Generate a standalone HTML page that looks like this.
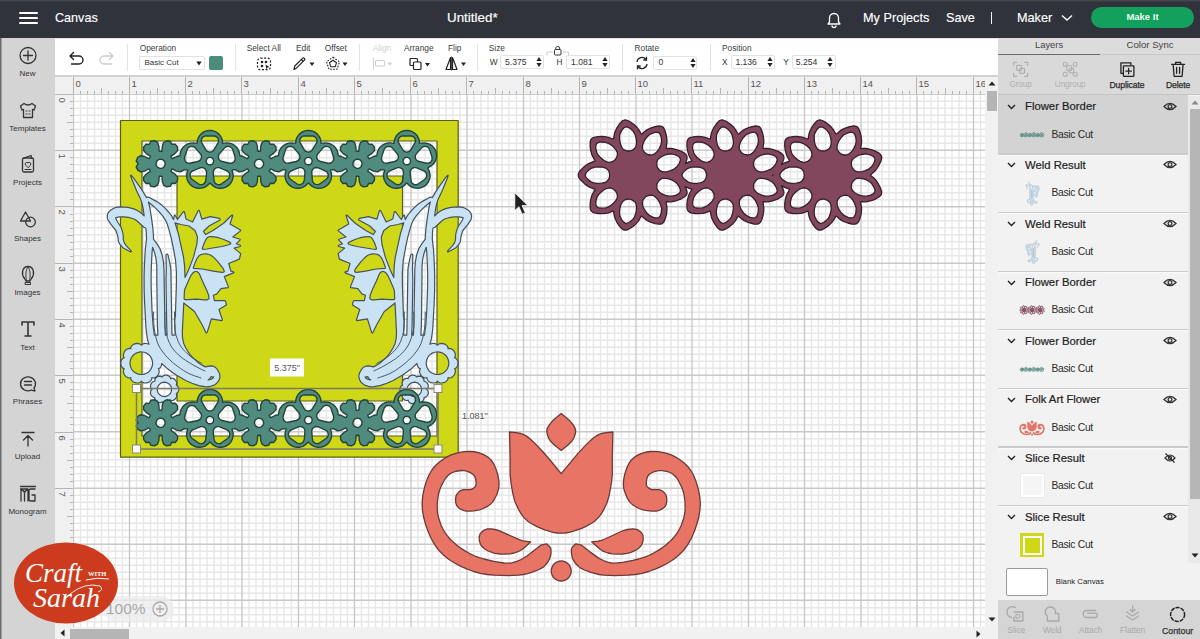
<!DOCTYPE html>
<html><head><meta charset="utf-8">
<style>
*{margin:0;padding:0;box-sizing:border-box}
html,body{width:1200px;height:639px;overflow:hidden;background:#fff;font-family:"Liberation Sans",sans-serif}
.a{position:absolute}
.t{position:absolute;white-space:nowrap;line-height:1}
#top{left:0;top:0;width:1200px;height:38px;background:#30333b;box-shadow:inset 0 1.5px 0 #45474d}
#side{left:0;top:38px;width:55px;height:601px;background:#d4d4d4;box-shadow:inset 1.5px 0 0 #6a6a6a}
#tool{left:55px;top:38px;width:943px;height:39px;background:#fff;box-shadow:inset 0 1px 0 #e6e6e6,inset 0 -2px 0 #d2d2d2}
#rulT{left:55px;top:77px;width:930px;height:17px;background:#f0f0f0}
#rulL{left:55px;top:94px;width:18px;height:533px;background:#f0f0f0}
#canvas{left:73px;top:94px;width:912px;height:533px;background:#fff;overflow:hidden}
#vsb{left:985px;top:77px;width:13px;height:550px;background:#f0f0f0}
#hsb{left:55px;top:627px;width:930px;height:12px;background:#f0f0f0}
#panel{left:998px;top:38px;width:202px;height:601px;background:#f2f2f2;overflow:hidden}
.lbl{font-size:8px;color:#333;text-align:center;width:55px;left:0}
.tl{font-size:8.5px;color:#444}
.w{color:#fff;-webkit-text-stroke:0.15px #fff}
</style></head><body>
<!-- TOP BAR -->
<div id="top" class="a">
  <div class="a" style="left:19px;top:12px;width:19px;height:2px;background:#fff;border-radius:1px"></div>
  <div class="a" style="left:19px;top:17px;width:19px;height:2px;background:#fff;border-radius:1px"></div>
  <div class="a" style="left:19px;top:22px;width:19px;height:2px;background:#fff;border-radius:1px"></div>
  <div class="t w" style="left:55px;top:11.8px;font-size:12.6px">Canvas</div>
  <div class="t w" style="left:447px;top:10.8px;font-size:13.4px">Untitled*</div>
  <svg class="a" style="left:824px;top:10px" width="20" height="19" viewBox="0 0 20 19"><path d="M4 14 L5.5 12 V8 A4.5 4.5 0 0 1 14.5 8 V12 L16 14 Z M8 15.5 A2 2 0 0 0 12 15.5" fill="none" stroke="#fff" stroke-width="1.3" stroke-linejoin="round"/></svg>
  <div class="t w" style="left:863px;top:11.8px;font-size:12.7px">My Projects</div>
  <div class="t w" style="left:946px;top:11.8px;font-size:12.7px">Save</div>
  <div class="a" style="left:991px;top:11.5px;width:1.2px;height:12px;background:#f4f4f4"></div>
  <div class="t w" style="left:1017px;top:11.8px;font-size:12.7px">Maker</div>
  <svg class="a" style="left:1061px;top:14px" width="12" height="8" viewBox="0 0 12 8"><path d="M1 1.5 L6 6 L11 1.5" fill="none" stroke="#fff" stroke-width="1.4"/></svg>
  <div class="a" style="left:1091px;top:7px;width:103px;height:21px;background:#12a05c;border-radius:11px"></div>
  <div class="t" style="left:1091px;top:12px;width:103px;text-align:center;font-size:9.5px;color:#e8fff0;font-weight:bold">Make It</div>
</div>

<!-- LEFT SIDEBAR -->
<div id="side" class="a">
  <svg class="a" style="left:0;top:0" width="55" height="601" fill="none" stroke="#333" stroke-width="1.3" stroke-linecap="round" stroke-linejoin="round">
    <!-- New y=17 -->
    <circle cx="28" cy="17.5" r="8"/><path d="M28 13V22M23.5 17.5H32.5"/>
    <!-- Templates y=72 -->
    <path d="M24 65.5 L20.5 68 L22 72 L23.5 71.5 V79.5 H32.5 V71.5 L34 72 L35.5 68 L32 65.5 Q28 68.5 24 65.5Z"/>
    <path d="M26 73h1M29 73h1M26 76h1M29 76h1" stroke-width="1"/>
    <!-- Projects y=127 -->
    <rect x="22.5" y="120" width="11" height="14" rx="1.5"/><path d="M24 120 L31 117.5 L31.5 120"/>
    <path d="M28 129.5 L25.5 127 A1.4 1.4 0 0 1 28 125 A1.4 1.4 0 0 1 30.5 127Z" stroke-width="1"/><path d="M25 131.5h6" stroke-width="1"/>
    <!-- Shapes y=182 -->
    <path d="M25.5 174 L20.5 183 H30.5Z"/><circle cx="30.5" cy="184" r="4.8"/>
    <!-- Images y=237 -->
    <path d="M28 228.5 C22 228.5 21 236 24.5 240.5 L26 243 H30 L31.5 240.5 C35 236 34 228.5 28 228.5Z"/><path d="M28 228.5 C25.5 232 25.5 238 26.5 243M28 228.5 C30.5 232 30.5 238 29.5 243M25.5 244.5 H30.5 V246.5 H25.5Z" stroke-width="1"/>
    <!-- Text y=291 -->
    <path d="M22 287 V284 H34 V287M28 284 V298M25 298 H31" stroke-width="1.6"/>
    <!-- Phrases y=346 -->
    <path d="M34 350 L35 353 L31.5 352 A7.5 7 0 1 1 34 350Z"/><path d="M24.5 343.5h7M24.5 347h7"/>
    <!-- Upload y=401 -->
    <path d="M22 394.5 H34M28 397.5 V408M23.5 402 L28 397.5 L32.5 402"/>
    <!-- Monogram y=457 -->
    <path d="M20.5 448.5 H35.5M20.5 451 H28 M21 451 V463 M21 452 Q24 452 24.5 455 V463 M24.5 455 Q25 452 28 452 V463 M35 451 H30.5 Q29 451 29 453 V461 Q29 463 31 463 H35 V457 H32" stroke-width="1.3"/>
  </svg>
  <div class="t lbl" style="top:32.0px">New</div>
  <div class="t lbl" style="top:86.5px">Templates</div>
  <div class="t lbl" style="top:141.0px">Projects</div>
  <div class="t lbl" style="top:196.8px">Shapes</div>
  <div class="t lbl" style="top:251.0px">Images</div>
  <div class="t lbl" style="top:305.5px">Text</div>
  <div class="t lbl" style="top:360.4px">Phrases</div>
  <div class="t lbl" style="top:414.8px">Upload</div>
  <div class="t lbl" style="top:469.7px">Monogram</div>
</div>

<!-- TOOLBAR -->
<div id="tool" class="a"><svg class="a" style="left:12px;top:13px" width="62" height="16" fill="none" stroke-width="1.4" stroke-linecap="round" stroke-linejoin="round"><path d="M3 5H12A4 4 0 0 1 12 13H4.5M3 5L6.5 1.5M3 5L6.5 8.5" stroke="#222"/><path d="M46 5H37A4 4 0 0 0 37 13H44.5M46 5L42.5 1.5M46 5L42.5 8.5" stroke="#cdcdcd"/></svg>
<div class="a" style="left:72.0px;top:6px;width:1px;height:27px;background:#e4e4e4"></div>
<div class="t" style="left:84.7px;top:5.6px;font-size:8.3px;color:#3a3a3a">Operation</div>
<div class="a" style="left:84.0px;top:17.7px;width:66.4px;height:14px;border:1px solid #e2e2e2;border-radius:2px"></div>
<div class="t" style="left:89.5px;top:20.7px;font-size:8.0px;color:#333">Basic Cut</div>
<svg class="a" style="left:141.0px;top:22.5px" width="6" height="5"><path d="M0.3 0.5H5.7L3 4.5Z" fill="#222"/></svg>
<div class="a" style="left:154.4px;top:17.7px;width:13.7px;height:14.3px;background:#4b8c7b;border-radius:2px"></div>
<div class="a" style="left:179.7px;top:6px;width:1px;height:27px;background:#e4e4e4"></div>
<div class="t" style="left:191.7px;top:5.6px;font-size:8.3px;color:#3a3a3a">Select All</div>
<svg class="a" style="left:201.0px;top:19.0px" width="17" height="14" fill="none" stroke="#222" stroke-width="1.2"><rect x="1.5" y="1.2" width="13" height="11.5" rx="3" stroke-dasharray="2 1.6"/><circle cx="6" cy="5" r="1.3" fill="#222" stroke="none"/><circle cx="10" cy="5" r="1.3" fill="#222" stroke="none"/><circle cx="6" cy="9" r="1.3" fill="#222" stroke="none"/><path d="M9.5 7.5L13.5 10L11.5 10.5L10.5 12.5Z" fill="#222" stroke="none"/></svg>
<div class="t" style="left:241.0px;top:5.6px;font-size:8.3px;color:#3a3a3a">Edit</div>
<svg class="a" style="left:237.0px;top:18.0px" width="24" height="15" fill="none" stroke="#222" stroke-width="1.2" stroke-linejoin="round"><path d="M2 13.5L2.8 10L10.5 2.3A1.3 1.3 0 0 1 12.4 4.2L4.7 11.9Z"/><path d="M9.3 3.5L11.2 5.4"/><path d="M17.5 6.5H22.5L20 10Z" fill="#222" stroke="none"/></svg>
<div class="t" style="left:269.8px;top:5.6px;font-size:8.3px;color:#3a3a3a">Offset</div>
<svg class="a" style="left:270.0px;top:18.0px" width="24" height="15" fill="none" stroke="#222" stroke-width="1.1"><path d="M8 1.2L14.5 5.8L12 13.3H4L1.5 5.8Z" stroke-dasharray="1.7 1.3"/><path d="M8 4.3L11.5 6.8L10.2 10.8H5.8L4.5 6.8Z"/><path d="M17.5 6.5H22.5L20 10Z" fill="#222" stroke="none"/></svg>
<div class="a" style="left:304.0px;top:6px;width:1px;height:27px;background:#e4e4e4"></div>
<div class="t" style="left:317.7px;top:5.6px;font-size:8.3px;color:#cfcfcf">Align</div>
<svg class="a" style="left:317.0px;top:18.0px" width="22" height="15" fill="none" stroke="#d0d0d0" stroke-width="1.1"><path d="M1.5 1.5V13.5"/><rect x="3.5" y="4.5" width="9" height="5.5" rx="1"/><path d="M15.5 6.5H20L17.75 10Z" fill="#d0d0d0" stroke="none"/></svg>
<div class="t" style="left:349.0px;top:5.6px;font-size:8.3px;color:#3a3a3a">Arrange</div>
<svg class="a" style="left:353.5px;top:18.5px" width="24" height="14" fill="none" stroke="#222" stroke-width="1.2"><rect x="1" y="1.5" width="7.5" height="7" rx="1"/><rect x="4.5" y="5" width="7.5" height="7.5" rx="1" fill="#fff"/><path d="M16 6H21L18.5 9.5Z" fill="#222" stroke="none"/></svg>
<div class="t" style="left:393.0px;top:5.6px;font-size:8.3px;color:#3a3a3a">Flip</div>
<svg class="a" style="left:390.0px;top:18.0px" width="24" height="15" fill="none" stroke="#222" stroke-width="1.2" stroke-linejoin="round"><path d="M5.5 1.5L1 13.5H5.5Z"/><path d="M7.5 1.5L12 13.5H7.5Z"/><path d="M6.5 0.5V14.5" stroke-width="0.8"/><path d="M16 6.5H21L18.5 10Z" fill="#222" stroke="none"/></svg>
<div class="a" style="left:422.3px;top:6px;width:1px;height:27px;background:#e4e4e4"></div>
<div class="t" style="left:433.8px;top:5.6px;font-size:8.3px;color:#3a3a3a">Size</div>
<div class="t" style="left:434.8px;top:20.3px;font-size:8.3px;color:#333">W</div>
<div class="a" style="left:445.2px;top:17.0px;width:43.8px;height:14.3px;border:1px solid #e2e2e2;border-radius:2px;background:#fff"></div>
<div class="t" style="left:450.0px;top:19.9px;font-size:8.6px;color:#333">5.375</div>
<svg class="a" style="left:481.4px;top:18.1px" width="6" height="12"><path d="M3 1L5.6 5H0.4ZM3 11L5.6 7H0.4Z" fill="#222"/></svg>
<svg class="a" style="left:491.0px;top:7.0px" width="24" height="12" fill="none" stroke="#333" stroke-width="1"><rect x="8.5" y="4.5" width="6.5" height="5.5" rx="1"/><path d="M9.8 4.5V3A2 2 0 0 1 13.7 3V4.5"/><path d="M1 10.5V7H7M16.5 7H22.5V10.5" stroke="#cfcfcf"/></svg>
<div class="t" style="left:501.5px;top:20.3px;font-size:8.3px;color:#333">H</div>
<div class="a" style="left:511.3px;top:17.0px;width:43.7px;height:14.3px;border:1px solid #e2e2e2;border-radius:2px;background:#fff"></div>
<div class="t" style="left:516.0px;top:19.9px;font-size:8.6px;color:#333">1.081</div>
<svg class="a" style="left:547.4px;top:18.1px" width="6" height="12"><path d="M3 1L5.6 5H0.4ZM3 11L5.6 7H0.4Z" fill="#222"/></svg>
<div class="a" style="left:567.0px;top:6px;width:1px;height:27px;background:#e4e4e4"></div>
<div class="t" style="left:579.6px;top:5.6px;font-size:8.3px;color:#3a3a3a">Rotate</div>
<svg class="a" style="left:580.0px;top:18.0px" width="14" height="14" fill="none" stroke="#222" stroke-width="1.3"><path d="M2 6A5 5 0 0 1 11 3.5M12 8A5 5 0 0 1 3 10.5"/><path d="M11.5 0.8V4H8.3M2.5 13.2V10H5.7"/></svg>
<div class="a" style="left:598.3px;top:17.5px;width:43.7px;height:14.3px;border:1px solid #e2e2e2;border-radius:2px;background:#fff"></div>
<div class="t" style="left:603.5px;top:20.4px;font-size:8.6px;color:#333">0</div>
<svg class="a" style="left:634.5px;top:18.6px" width="6" height="12"><path d="M3 1L5.6 5H0.4ZM3 11L5.6 7H0.4Z" fill="#222"/></svg>
<div class="a" style="left:654.5px;top:6px;width:1px;height:27px;background:#e4e4e4"></div>
<div class="t" style="left:667.0px;top:5.6px;font-size:8.3px;color:#3a3a3a">Position</div>
<div class="t" style="left:667.0px;top:20.3px;font-size:8.3px;color:#333">X</div>
<div class="a" style="left:676.3px;top:17.0px;width:44.1px;height:14.3px;border:1px solid #e2e2e2;border-radius:2px;background:#fff"></div>
<div class="t" style="left:680.4px;top:19.9px;font-size:8.6px;color:#333">1.136</div>
<svg class="a" style="left:711.8px;top:18.1px" width="6" height="12"><path d="M3 1L5.6 5H0.4ZM3 11L5.6 7H0.4Z" fill="#222"/></svg>
<div class="t" style="left:728.3px;top:20.3px;font-size:8.3px;color:#333">Y</div>
<div class="a" style="left:736.7px;top:17.0px;width:44.8px;height:14.3px;border:1px solid #e2e2e2;border-radius:2px;background:#fff"></div>
<div class="t" style="left:740.8px;top:19.9px;font-size:8.6px;color:#333">5.254</div>
<svg class="a" style="left:772.2px;top:18.1px" width="6" height="12"><path d="M3 1L5.6 5H0.4ZM3 11L5.6 7H0.4Z" fill="#222"/></svg></div>

<!-- RULERS -->
<div id="rulT" class="a"><svg class="a" style="left:0;top:0" width="930" height="17" shape-rendering="crispEdges"><path d="M18.5 0V17M25.5 14V17M32.5 14V17M39.5 14V17M46.5 11V17M53.5 14V17M60.5 14V17M67.5 14V17M74.5 0V17M81.5 14V17M88.5 14V17M95.5 14V17M102.5 11V17M109.5 14V17M116.5 14V17M123.5 14V17M130.5 0V17M137.5 14V17M144.5 14V17M151.5 14V17M158.5 11V17M165.5 14V17M172.5 14V17M179.5 14V17M186.5 0V17M193.5 14V17M201.5 14V17M208.5 14V17M215.5 11V17M222.5 14V17M229.5 14V17M236.5 14V17M243.5 0V17M250.5 14V17M257.5 14V17M264.5 14V17M271.5 11V17M278.5 14V17M285.5 14V17M292.5 14V17M299.5 0V17M306.5 14V17M313.5 14V17M320.5 14V17M327.5 11V17M334.5 14V17M341.5 14V17M348.5 14V17M355.5 0V17M362.5 14V17M369.5 14V17M376.5 14V17M383.5 11V17M390.5 14V17M397.5 14V17M404.5 14V17M411.5 0V17M418.5 14V17M426.5 14V17M433.5 14V17M440.5 11V17M447.5 14V17M454.5 14V17M461.5 14V17M468.5 0V17M475.5 14V17M482.5 14V17M489.5 14V17M496.5 11V17M503.5 14V17M510.5 14V17M517.5 14V17M524.5 0V17M531.5 14V17M538.5 14V17M545.5 14V17M552.5 11V17M559.5 14V17M566.5 14V17M573.5 14V17M580.5 0V17M587.5 14V17M594.5 14V17M601.5 14V17M608.5 11V17M615.5 14V17M622.5 14V17M629.5 14V17M636.5 0V17M643.5 14V17M651.5 14V17M658.5 14V17M665.5 11V17M672.5 14V17M679.5 14V17M686.5 14V17M693.5 0V17M700.5 14V17M707.5 14V17M714.5 14V17M721.5 11V17M728.5 14V17M735.5 14V17M742.5 14V17M749.5 0V17M756.5 14V17M763.5 14V17M770.5 14V17M777.5 11V17M784.5 14V17M791.5 14V17M798.5 14V17M805.5 0V17M812.5 14V17M819.5 14V17M826.5 14V17M833.5 11V17M840.5 14V17M847.5 14V17M854.5 14V17M861.5 0V17M868.5 14V17M876.5 14V17M883.5 14V17M890.5 11V17M897.5 14V17M904.5 14V17M911.5 14V17M918.5 0V17M925.5 14V17" stroke="#b4b4b4" stroke-width="1"/><g fill="#555" font-family="Liberation Sans"><text x="20.5" y="10" font-size="9.5">0</text><text x="76.5" y="10" font-size="9.5">1</text><text x="132.5" y="10" font-size="9.5">2</text><text x="188.5" y="10" font-size="9.5">3</text><text x="245.5" y="10" font-size="9.5">4</text><text x="301.5" y="10" font-size="9.5">5</text><text x="357.5" y="10" font-size="9.5">6</text><text x="413.5" y="10" font-size="9.5">7</text><text x="470.5" y="10" font-size="9.5">8</text><text x="526.5" y="10" font-size="9.5">9</text><text x="582.5" y="10" font-size="9.5">10</text><text x="638.5" y="10" font-size="9.5">11</text><text x="695.5" y="10" font-size="9.5">12</text><text x="751.5" y="10" font-size="9.5">13</text><text x="807.5" y="10" font-size="9.5">14</text><text x="863.5" y="10" font-size="9.5">15</text><text x="920.5" y="10" font-size="9.5">16</text></g></svg></div>
<div id="rulL" class="a"><svg class="a" style="left:0;top:0" width="18" height="533" shape-rendering="crispEdges"><path d="M0 0.5H18M15 7.5H18M15 14.5H18M15 21.5H18M12 28.5H18M15 35.5H18M15 42.5H18M15 49.5H18M0 56.5H18M15 63.5H18M15 70.5H18M15 77.5H18M12 84.5H18M15 91.5H18M15 98.5H18M15 105.5H18M0 112.5H18M15 120.5H18M15 127.5H18M15 134.5H18M12 141.5H18M15 148.5H18M15 155.5H18M15 162.5H18M0 169.5H18M15 176.5H18M15 183.5H18M15 190.5H18M12 197.5H18M15 204.5H18M15 211.5H18M15 218.5H18M0 225.5H18M15 232.5H18M15 239.5H18M15 246.5H18M12 253.5H18M15 260.5H18M15 267.5H18M15 274.5H18M0 281.5H18M15 288.5H18M15 295.5H18M15 302.5H18M12 309.5H18M15 316.5H18M15 323.5H18M15 330.5H18M0 338.5H18M15 345.5H18M15 352.5H18M15 359.5H18M12 366.5H18M15 373.5H18M15 380.5H18M15 387.5H18M0 394.5H18M15 401.5H18M15 408.5H18M15 415.5H18M12 422.5H18M15 429.5H18M15 436.5H18M15 443.5H18M0 450.5H18M15 457.5H18M15 464.5H18M15 471.5H18M12 478.5H18M15 485.5H18M15 492.5H18M15 499.5H18M0 506.5H18M15 513.5H18M15 520.5H18M15 527.5H18" stroke="#b4b4b4" stroke-width="1"/><g fill="#555" font-family="Liberation Sans"><text transform="translate(4,3.5) rotate(90)" font-size="9.5">0</text><text transform="translate(4,59.5) rotate(90)" font-size="9.5">1</text><text transform="translate(4,115.5) rotate(90)" font-size="9.5">2</text><text transform="translate(4,172.5) rotate(90)" font-size="9.5">3</text><text transform="translate(4,228.5) rotate(90)" font-size="9.5">4</text><text transform="translate(4,284.5) rotate(90)" font-size="9.5">5</text><text transform="translate(4,341.5) rotate(90)" font-size="9.5">6</text><text transform="translate(4,397.5) rotate(90)" font-size="9.5">7</text><text transform="translate(4,453.5) rotate(90)" font-size="9.5">8</text><text transform="translate(4,509.5) rotate(90)" font-size="9.5">9</text></g></svg></div>
<div id="canvas" class="a"><svg class="a" style="left:0;top:0" width="912" height="533"><path d="M7.5 0V533M14.5 0V533M21.5 0V533M28.5 0V533M35.5 0V533M42.5 0V533M49.5 0V533M63.5 0V533M70.5 0V533M77.5 0V533M84.5 0V533M91.5 0V533M98.5 0V533M106.0 0V533M120.0 0V533M127.0 0V533M134.0 0V533M141.0 0V533M148.0 0V533M155.0 0V533M162.0 0V533M176.0 0V533M183.0 0V533M190.0 0V533M197.0 0V533M204.0 0V533M211.0 0V533M218.5 0V533M232.5 0V533M239.5 0V533M246.5 0V533M253.5 0V533M260.5 0V533M267.5 0V533M274.5 0V533M288.5 0V533M295.5 0V533M302.5 0V533M309.5 0V533M316.5 0V533M323.5 0V533M331.0 0V533M345.0 0V533M352.0 0V533M359.0 0V533M366.0 0V533M373.0 0V533M380.0 0V533M387.0 0V533M401.0 0V533M408.0 0V533M415.0 0V533M422.0 0V533M429.0 0V533M436.0 0V533M443.5 0V533M457.5 0V533M464.5 0V533M471.5 0V533M478.5 0V533M485.5 0V533M492.5 0V533M499.5 0V533M513.5 0V533M520.5 0V533M527.5 0V533M534.5 0V533M541.5 0V533M548.5 0V533M556.0 0V533M570.0 0V533M577.0 0V533M584.0 0V533M591.0 0V533M598.0 0V533M605.0 0V533M612.0 0V533M626.0 0V533M633.0 0V533M640.0 0V533M647.0 0V533M654.0 0V533M661.0 0V533M668.5 0V533M682.5 0V533M689.5 0V533M696.5 0V533M703.5 0V533M710.5 0V533M717.5 0V533M724.5 0V533M738.5 0V533M745.5 0V533M752.5 0V533M759.5 0V533M766.5 0V533M773.5 0V533M781.0 0V533M795.0 0V533M802.0 0V533M809.0 0V533M816.0 0V533M823.0 0V533M830.0 0V533M837.0 0V533M851.0 0V533M858.0 0V533M865.0 0V533M872.0 0V533M879.0 0V533M886.0 0V533M893.5 0V533M907.5 0V533M0 7.25H912M0 14.25H912M0 21.25H912M0 28.25H912M0 35.25H912M0 42.25H912M0 49.25H912M0 63.75H912M0 70.75H912M0 77.75H912M0 84.75H912M0 91.75H912M0 98.75H912M0 105.75H912M0 119.75H912M0 126.75H912M0 133.75H912M0 140.75H912M0 147.75H912M0 154.75H912M0 161.75H912M0 176.25H912M0 183.25H912M0 190.25H912M0 197.25H912M0 204.25H912M0 211.25H912M0 218.25H912M0 232.25H912M0 239.25H912M0 246.25H912M0 253.25H912M0 260.25H912M0 267.25H912M0 274.25H912M0 288.75H912M0 295.75H912M0 302.75H912M0 309.75H912M0 316.75H912M0 323.75H912M0 330.75H912M0 344.75H912M0 351.75H912M0 358.75H912M0 365.75H912M0 372.75H912M0 379.75H912M0 386.75H912M0 401.25H912M0 408.25H912M0 415.25H912M0 422.25H912M0 429.25H912M0 436.25H912M0 443.25H912M0 457.25H912M0 464.25H912M0 471.25H912M0 478.25H912M0 485.25H912M0 492.25H912M0 499.25H912M0 513.75H912M0 520.75H912M0 527.75H912" stroke="#e7e7e7" stroke-width="1.4"/><path d="M0.5 0V533M56.5 0V533M113.0 0V533M169.0 0V533M225.5 0V533M281.5 0V533M338.0 0V533M394.0 0V533M450.5 0V533M506.5 0V533M563.0 0V533M619.0 0V533M675.5 0V533M731.5 0V533M788.0 0V533M844.0 0V533M900.5 0V533M0 0.25H912M0 56.25H912M0 112.75H912M0 169.25H912M0 225.25H912M0 281.25H912M0 337.75H912M0 394.25H912M0 450.25H912M0 506.25H912" stroke="#c9c9c9" stroke-width="1.4"/></svg><svg class="a" style="left:-73px;top:-94px" width="1200" height="639" viewBox="0 0 1200 639"><path d="M177.0,176.0 177.0,401.0 402.5,401.0 402.5,176.0ZM120.5,457.2 458.2,457.2 458.2,120.5 120.5,120.5ZM142.0,436.0 142.0,141.0 437.0,141.0 437.0,436.0Z" fill="#cfd817" fill-rule="evenodd" stroke="#5a5e1c" stroke-width="1.2" stroke-linejoin="round" /><path d="M561.2,413.4 553.4,419.9 549.7,424.3 547.5,427.8 547.0,429.1 546.8,431.6 547.6,435.6 548.8,438.4 550.4,441.0 554.4,445.0 561.2,450.4 568.0,445.0 572.0,441.0 573.6,438.4 574.8,435.6 575.5,432.9 575.6,430.3 574.9,427.8 573.6,425.5 569.0,419.9ZM509.5,432.0 510.1,458.0 510.1,474.4 511.0,483.0 512.7,492.8 514.2,499.2 515.2,502.2 518.9,510.2 521.8,514.9 523.6,517.1 527.8,521.2 530.4,523.0 536.9,526.6 544.8,529.9 553.1,532.3 557.2,533.0 561.2,533.2 565.2,533.0 569.3,532.3 573.5,531.2 581.7,528.3 585.5,526.6 592.0,523.0 594.6,521.2 598.8,517.1 600.6,514.9 603.5,510.2 607.2,502.2 609.0,496.0 610.9,486.2 611.8,480.0 612.3,474.4 612.3,458.0 612.9,432.0 606.1,432.7 601.5,433.5 599.2,434.3 597.1,435.3 593.0,438.2 586.7,444.1 577.8,453.6 561.2,473.6 550.0,460.0 542.2,451.0 533.5,441.9 527.3,436.6 525.3,435.3 523.2,434.3 520.9,433.5 516.3,432.7ZM536.6,548.6 527.3,555.7 521.2,559.5 516.9,561.3 512.6,562.7 510.2,563.1 507.4,563.2 504.0,563.0 494.8,561.6 483.9,559.0 478.5,557.4 473.7,555.5 469.2,553.3 464.9,550.9 460.7,548.1 456.8,545.2 453.2,542.1 450.0,539.0 447.2,535.7 444.8,532.3 442.8,528.7 441.0,525.0 438.5,517.5 437.7,513.6 437.3,509.6 437.2,505.6 437.4,501.5 438.5,494.0 439.5,490.5 440.8,487.0 444.1,480.5 446.0,477.7 448.0,475.5 450.1,473.8 452.4,472.5 454.9,471.6 457.3,471.0 462.0,470.5 464.2,470.6 466.4,471.1 470.6,472.7 473.7,475.0 474.7,476.4 475.4,478.1 476.1,481.9 476.0,485.0 475.1,487.0 473.5,488.3 471.3,489.3 470.0,489.6 463.4,489.6 460.7,490.6 458.4,492.4 456.6,494.7 456.0,496.0 455.5,499.2 455.8,502.9 456.3,504.6 457.0,506.0 459.1,508.3 460.6,509.2 464.0,510.6 466.0,511.0 471.0,511.1 473.8,510.9 479.5,509.8 482.0,509.0 486.6,506.9 490.7,503.9 492.5,502.1 494.0,500.0 496.7,494.8 497.8,491.8 498.6,488.6 499.0,485.3 499.0,482.0 498.5,478.4 497.7,474.5 496.5,470.4 495.0,466.5 493.1,462.9 491.0,460.0 488.5,457.6 485.7,455.7 482.5,454.1 479.1,452.8 475.6,452.0 472.0,451.5 468.2,451.4 464.2,451.6 460.0,452.3 455.8,453.3 451.8,454.6 448.0,456.4 444.4,458.5 440.8,461.0 437.4,463.8 434.2,467.0 431.4,470.8 429.0,475.0 426.9,479.9 425.1,485.4 423.6,491.4 422.5,497.7 422.1,504.1 422.5,510.4 423.6,517.0 425.5,524.0 427.9,531.1 430.9,538.0 434.5,544.4 438.5,550.0 443.2,554.8 448.6,559.2 454.6,563.0 460.9,566.3 467.3,569.1 473.7,571.5 480.3,573.3 487.2,574.5 494.3,575.2 507.8,575.6 518.7,575.2 523.4,574.5 527.6,573.6 531.5,572.4 538.0,570.0 540.6,568.7 542.8,567.4 544.6,565.9 547.4,562.7 549.5,559.2 550.7,555.0 551.0,553.0 551.0,549.5 550.6,548.1 549.9,547.0 546.5,543.8 540.8,545.2ZM575.9,543.8 572.5,547.0 571.8,548.1 571.4,549.5 571.4,553.0 572.2,557.1 572.9,559.2 573.9,561.0 576.3,564.3 579.6,567.4 581.8,568.7 584.4,570.0 590.9,572.4 599.0,574.5 603.7,575.2 614.6,575.6 628.1,575.2 635.2,574.5 642.1,573.3 648.7,571.5 655.1,569.1 661.5,566.3 667.8,563.0 673.8,559.2 679.2,554.8 683.9,550.0 687.9,544.4 691.5,538.0 694.5,531.1 696.9,524.0 698.8,517.0 699.9,510.4 700.3,504.1 699.9,497.7 698.8,491.4 697.3,485.4 695.5,479.9 693.4,475.0 691.0,470.8 688.2,467.0 685.0,463.8 681.6,461.0 678.0,458.5 674.4,456.4 670.6,454.6 666.6,453.3 662.4,452.3 658.2,451.6 654.2,451.4 650.4,451.5 646.8,452.0 643.3,452.8 639.9,454.1 636.7,455.7 633.9,457.6 631.4,460.0 629.3,462.9 627.4,466.5 625.9,470.4 624.7,474.5 623.9,478.4 623.4,482.0 623.4,485.3 623.8,488.6 624.7,491.8 627.0,497.6 628.4,500.0 629.9,502.1 631.7,503.9 633.7,505.5 638.1,508.0 642.9,509.8 645.7,510.4 651.4,511.1 656.4,511.0 658.4,510.6 661.8,509.2 664.4,507.2 665.4,506.0 666.1,504.6 666.8,501.1 666.7,497.5 665.8,494.7 664.0,492.4 661.7,490.6 659.0,489.6 652.4,489.6 651.1,489.3 648.0,487.7 646.7,486.1 646.4,485.0 646.3,481.9 647.0,478.1 647.7,476.4 648.7,475.0 650.1,473.8 653.8,471.8 658.2,470.6 662.7,470.6 667.5,471.6 670.0,472.5 672.3,473.8 674.4,475.5 676.4,477.7 678.3,480.5 681.6,487.0 682.9,490.5 683.9,494.0 685.0,501.5 685.1,509.6 684.7,513.6 683.9,517.5 681.4,525.0 679.6,528.7 677.6,532.3 675.2,535.7 672.4,539.0 669.2,542.1 665.6,545.2 661.7,548.1 657.5,550.9 653.2,553.3 648.7,555.5 643.9,557.4 638.5,559.0 633.0,560.4 622.6,562.4 615.0,563.2 612.2,563.1 607.6,562.1 603.4,560.5 599.1,558.4 589.5,551.6 581.6,545.2ZM530.6,541.9 522.8,540.8 519.3,539.7 499.1,530.6 495.0,529.5 491.1,528.9 487.5,529.0 486.0,529.3 483.2,530.7 480.9,532.9 480.0,534.1 479.5,535.5 479.2,537.0 479.4,540.7 480.5,544.4 481.5,546.0 484.3,548.7 488.2,551.0 492.5,552.7 494.9,553.3 500.2,554.0 505.6,554.1 510.2,553.8 514.3,553.0 518.1,551.7 522.0,549.5 524.0,547.9ZM596.4,546.1 600.4,549.5 602.4,550.8 604.3,551.7 608.1,553.0 612.2,553.8 616.8,554.1 622.2,554.0 627.5,553.3 632.1,551.9 636.2,549.9 639.6,547.4 640.9,546.0 641.9,544.4 643.0,540.7 643.2,538.8 642.9,535.5 642.4,534.1 640.5,531.7 637.8,529.9 636.4,529.3 633.1,528.8 627.4,529.5 623.3,530.6 621.1,531.5 604.9,539.0 601.4,540.3 597.7,541.1 591.8,541.9ZM571.0,569.0 570.4,567.2 569.5,565.4 568.3,563.9 566.8,562.7 565.0,561.8 563.2,561.2 561.2,561.0 559.2,561.2 557.4,561.8 555.6,562.7 554.1,563.9 552.9,565.4 552.0,567.2 551.4,569.0 551.2,571.0 551.4,573.0 552.0,574.8 552.9,576.6 554.1,578.1 555.6,579.3 557.4,580.2 559.2,580.8 561.2,581.0 563.2,580.8 565.0,580.2 566.8,579.3 568.3,578.1 569.5,576.6 570.4,574.8 571.0,573.0 571.2,571.0Z" fill="#e77465" fill-rule="evenodd" stroke="#6a3b38" stroke-width="1.3" stroke-linejoin="round" /><path d="M136.2,161.0 138.1,163.7 137.9,164.2 136.2,166.6 137.7,170.1 140.6,171.9 144.6,171.1 148.7,169.0 149.3,169.1 150.3,170.9 150.3,171.4 146.3,174.0 143.6,177.1 143.7,180.6 146.0,183.5 149.2,183.3 149.6,183.6 150.8,186.3 154.5,186.9 157.6,185.1 158.9,181.3 159.1,176.7 159.5,176.3 161.6,176.3 162.0,176.5 162.3,181.3 163.6,185.1 166.6,186.8 170.4,186.3 171.6,183.6 172.0,183.3 175.2,183.5 177.5,180.6 177.6,177.1 174.9,174.0 170.9,171.4 170.9,170.9 171.9,169.1 172.3,168.9 176.6,171.1 180.6,171.9 183.9,169.8 187.5,169.9 187.8,170.4 186.9,173.2 186.6,176.5 187.3,179.7 188.3,182.0 190.3,184.6 193.0,186.7 195.2,187.7 198.5,188.3 201.8,188.1 204.9,187.1 207.1,185.7 209.9,183.0 213.4,186.2 215.6,187.4 217.2,187.9 218.8,188.3 221.3,188.3 223.0,188.1 225.3,187.4 227.5,186.2 229.5,184.6 231.0,182.7 232.2,180.5 232.9,178.1 233.2,175.7 232.9,173.2 232.0,170.4 232.2,169.9 235.7,169.8 239.1,171.9 243.1,171.1 247.3,168.9 247.8,169.2 248.8,170.9 248.8,171.4 244.8,174.0 242.1,177.1 242.1,180.5 244.4,183.5 247.4,183.2 247.9,183.4 249.3,186.3 253.0,186.9 256.1,185.2 257.4,181.3 257.6,176.7 258.0,176.3 260.1,176.3 260.5,176.5 260.7,181.3 262.0,185.1 265.1,186.8 268.8,186.3 270.1,183.6 270.4,183.3 273.7,183.5 276.0,180.6 276.1,177.1 273.3,174.0 269.4,171.4 269.3,170.9 270.4,169.1 270.8,168.9 275.0,171.1 279.0,171.9 282.4,169.8 286.0,169.9 286.2,170.4 285.3,173.2 285.1,175.7 285.3,178.1 286.0,180.5 287.2,182.7 288.8,184.6 290.7,186.2 292.9,187.4 295.3,188.1 296.9,188.3 299.4,188.3 301.1,187.9 302.6,187.4 304.8,186.2 308.4,183.0 311.2,185.7 314.1,187.4 315.7,187.9 318.1,188.3 321.4,188.1 323.8,187.4 326.7,185.7 328.5,184.0 330.3,181.3 331.2,178.9 331.6,175.7 331.4,173.2 330.5,170.4 330.7,169.9 334.2,169.8 337.5,171.9 341.5,171.1 345.8,168.9 346.2,169.1 347.2,170.9 347.2,171.4 343.2,174.0 340.5,177.1 340.6,180.6 342.9,183.5 346.1,183.3 346.5,183.6 347.7,186.3 351.5,186.8 354.5,185.1 355.8,181.3 356.1,176.5 356.5,176.3 358.6,176.3 359.0,176.7 359.2,181.3 360.5,185.1 363.6,186.9 367.3,186.3 368.5,183.6 368.9,183.3 372.1,183.5 374.4,180.6 374.5,177.1 371.8,174.0 367.8,171.4 367.8,170.9 368.8,169.2 369.2,168.9 373.5,171.1 377.5,171.9 380.8,169.8 384.5,169.9 384.7,170.4 383.8,173.2 383.5,175.7 383.8,178.1 384.5,180.5 385.7,182.7 387.2,184.6 389.2,186.2 391.4,187.4 393.7,188.1 395.4,188.3 397.9,188.3 399.5,187.9 401.1,187.4 403.3,186.2 406.8,183.0 409.6,185.7 411.8,187.0 414.1,187.9 417.4,188.4 420.7,187.9 423.7,186.7 426.4,184.6 428.4,182.0 429.6,178.9 430.1,176.5 430.1,174.8 429.4,171.6 427.7,167.9 431.6,165.6 434.0,163.3 435.3,161.2 435.9,159.6 436.5,157.2 436.6,155.5 436.2,152.3 435.3,149.9 433.5,147.2 431.7,145.5 429.5,144.1 426.4,143.1 423.1,142.9 419.7,143.4 419.5,143.0 419.3,140.6 418.5,138.2 417.4,136.0 415.8,134.1 413.8,132.5 411.7,131.4 408.5,130.5 406.0,130.4 403.5,130.8 401.2,131.7 399.1,133.0 397.3,134.7 395.8,136.7 395.1,138.2 394.3,140.6 393.9,143.3 393.6,143.4 390.5,142.9 388.0,142.9 384.8,143.8 382.6,145.0 380.1,147.2 378.7,149.2 377.4,152.2 376.8,155.8 373.5,156.5 369.3,158.7 368.8,158.4 367.8,156.7 367.8,156.2 371.8,153.6 374.5,150.5 374.4,147.0 372.1,144.1 368.9,144.3 368.5,144.0 367.3,141.3 363.5,140.8 360.5,142.5 359.2,146.3 358.9,151.1 358.5,151.3 356.5,151.3 356.0,150.9 355.8,146.3 354.5,142.4 351.5,140.7 347.7,141.3 346.3,144.2 345.8,144.4 342.9,144.1 340.5,147.1 340.5,150.5 343.2,153.6 347.2,156.2 347.2,156.7 346.2,158.4 345.7,158.7 341.5,156.5 338.3,155.8 337.7,152.3 336.9,149.9 335.0,147.2 333.2,145.5 330.3,143.8 327.9,143.1 324.6,142.9 321.3,143.4 321.0,143.0 320.8,140.6 320.1,138.2 318.9,136.1 317.3,134.1 315.4,132.5 313.2,131.4 310.8,130.6 308.3,130.4 305.9,130.6 303.5,131.4 301.3,132.5 299.4,134.1 297.8,136.1 296.6,138.2 295.9,140.6 295.7,143.0 295.4,143.4 292.1,142.9 288.8,143.1 286.4,143.8 283.5,145.5 281.7,147.2 279.8,149.9 279.0,152.3 278.4,155.8 275.0,156.5 270.9,158.7 270.3,158.4 269.3,156.7 269.4,156.2 273.3,153.6 276.1,150.5 276.0,147.0 273.7,144.1 270.4,144.3 270.1,144.0 268.8,141.3 265.1,140.8 262.0,142.5 260.7,146.3 260.5,151.1 260.1,151.3 258.0,151.3 257.6,150.9 257.4,146.3 256.1,142.4 253.0,140.7 249.3,141.3 247.9,144.2 247.4,144.4 244.4,144.1 242.1,147.1 242.1,150.5 244.8,153.6 248.8,156.2 248.8,156.7 247.8,158.4 247.3,158.7 243.1,156.5 239.9,155.8 239.3,152.3 238.4,149.9 236.6,147.2 234.7,145.5 231.9,143.8 229.5,143.1 226.2,142.9 222.8,143.4 222.6,143.0 222.4,140.6 221.6,138.2 220.5,136.1 218.9,134.1 216.9,132.5 214.8,131.4 212.4,130.6 209.9,130.4 207.4,130.6 205.0,131.4 202.8,132.5 200.9,134.1 199.3,136.1 198.2,138.2 197.4,140.6 197.2,143.0 197.0,143.4 193.6,142.9 190.3,143.1 187.9,143.8 185.1,145.5 183.2,147.2 181.4,149.9 180.5,152.3 179.9,155.8 176.6,156.5 172.4,158.7 171.9,158.4 170.9,156.7 170.9,156.2 174.9,153.6 177.6,150.5 177.5,147.0 175.2,144.1 172.0,144.3 171.6,144.0 170.4,141.3 166.6,140.8 163.6,142.5 162.3,146.3 162.0,151.1 161.6,151.3 159.6,151.3 159.1,150.9 158.9,146.3 157.6,142.4 154.6,140.7 150.8,141.3 149.4,144.2 148.9,144.4 146.0,144.1 143.6,147.1 143.6,150.5 146.3,153.6 150.3,156.2 150.3,156.7 149.3,158.5 148.7,158.6 144.6,156.5 140.6,155.7 137.6,157.5ZM361.9,165.0 361.1,166.6 359.8,167.8 358.1,168.4 356.3,168.2 354.7,167.4 353.5,166.1 352.9,164.4 353.1,162.6 353.9,161.0 355.2,159.8 356.9,159.2 358.7,159.4 360.3,160.2 361.5,161.5 362.1,163.2ZM263.5,165.0 262.7,166.6 261.3,167.8 259.6,168.4 257.8,168.2 256.2,167.4 255.1,166.1 254.5,164.4 254.6,162.6 255.4,161.0 256.8,159.8 258.5,159.2 260.3,159.4 261.9,160.2 263.0,161.5 263.6,163.2ZM165.0,165.0 164.2,166.6 162.9,167.8 161.2,168.4 159.4,168.2 157.8,167.4 156.6,166.1 156.0,164.4 156.2,162.6 157.0,161.0 158.3,159.8 160.0,159.2 161.8,159.4 163.4,160.2 164.6,161.5 165.2,163.2ZM218.5,141.7 217.9,143.1 213.6,150.4 211.8,151.7 209.5,152.1 207.4,151.4 205.8,149.7 201.5,142.4 201.2,140.2 201.7,138.7 202.5,137.4 204.5,136.1 206.0,135.9 214.6,136.0 216.0,136.5 217.8,138.0 218.4,139.4ZM316.9,141.7 316.4,143.1 312.0,150.4 310.2,151.7 308.0,152.1 305.8,151.4 304.2,149.7 300.0,142.4 299.7,140.2 300.5,138.0 301.6,136.9 302.9,136.1 304.5,135.9 313.0,136.0 315.1,136.9 316.2,138.0 317.0,140.2ZM194.1,146.9 195.3,147.9 200.8,154.3 201.6,156.4 201.2,158.7 199.9,160.5 197.8,161.5 189.6,163.3 187.3,162.9 186.0,162.0 185.1,160.8 184.5,158.6 184.7,157.0 187.4,148.9 188.4,147.6 190.4,146.5 192.7,146.4ZM231.0,163.3 229.5,163.2 221.2,161.3 219.4,160.0 218.4,158.0 218.4,155.7 219.4,153.7 225.1,147.4 227.1,146.4 228.7,146.3 230.2,146.8 232.0,148.2 232.7,149.6 235.3,157.8 235.0,160.1 234.3,161.4 233.2,162.5ZM292.6,146.9 293.8,147.9 299.3,154.3 300.0,156.4 299.7,158.7 298.3,160.5 296.3,161.5 288.0,163.3 285.8,162.9 284.5,162.0 283.5,160.8 282.9,158.6 283.2,157.0 285.9,148.9 287.4,147.2 288.8,146.5 291.1,146.4ZM213.6,160.4 213.6,161.8 213.1,163.2 212.0,164.3 210.6,164.8 209.2,164.8 207.8,164.3 206.7,163.2 206.2,161.8 206.2,160.4 206.7,159.0 207.8,157.9 209.2,157.4 210.6,157.4 212.0,157.9 213.1,159.0ZM191.5,171.7 192.8,170.9 200.6,167.6 202.9,167.6 204.9,168.6 206.2,170.5 206.6,172.7 205.7,181.1 204.6,183.1 203.4,184.1 201.9,184.6 199.6,184.5 198.2,183.8 191.3,178.7 190.4,177.4 190.0,175.2 190.6,172.9ZM214.7,182.5 214.0,180.3 213.2,172.0 213.6,170.5 214.9,168.6 216.9,167.6 219.2,167.6 227.0,170.9 228.8,172.3 229.6,173.7 229.8,175.9 229.4,177.4 227.9,179.2 221.6,183.8 220.2,184.5 218.6,184.7 217.1,184.4 215.8,183.7ZM289.5,172.3 291.3,170.9 299.1,167.6 301.3,167.6 303.4,168.6 304.3,169.8 305.0,172.0 304.3,180.3 303.5,182.5 302.5,183.7 300.4,184.6 298.8,184.6 296.7,183.8 290.4,179.2 289.3,178.1 288.6,176.7 288.4,175.2 288.7,173.7ZM415.4,141.7 414.8,143.1 410.5,150.4 408.7,151.7 406.4,152.1 404.3,151.4 402.7,149.7 398.4,142.4 398.1,140.2 398.9,138.0 400.0,136.9 401.4,136.1 402.9,135.9 411.5,136.0 413.6,136.9 414.7,138.0 415.5,140.2ZM329.5,163.3 327.9,163.2 319.7,161.3 317.8,160.0 316.8,158.0 316.8,155.7 317.9,153.7 323.5,147.4 325.6,146.4 327.1,146.3 328.6,146.8 330.4,148.2 331.1,149.6 333.7,157.8 333.5,160.1 332.8,161.4 331.6,162.5ZM391.0,146.9 392.2,147.9 397.7,154.3 398.5,156.4 398.1,158.7 396.8,160.5 394.7,161.5 386.5,163.3 384.2,162.9 382.9,162.0 382.0,160.8 381.4,158.6 381.6,157.0 384.3,148.9 385.9,147.2 387.3,146.5 389.6,146.4ZM427.9,163.3 426.4,163.2 418.1,161.3 416.3,160.0 415.3,158.0 415.3,155.7 416.3,153.7 422.0,147.4 424.0,146.4 425.6,146.3 427.1,146.8 428.9,148.2 429.6,149.6 432.2,157.8 431.9,160.1 431.2,161.4 430.1,162.5ZM312.1,160.4 312.1,161.8 311.5,163.2 310.5,164.3 309.1,164.8 307.6,164.8 306.2,164.3 305.2,163.2 304.6,161.8 304.6,160.4 305.2,159.0 306.2,157.9 307.6,157.4 309.1,157.4 310.5,157.9 311.5,159.0ZM410.5,160.4 410.5,161.8 410.0,163.2 408.9,164.3 407.5,164.8 406.1,164.8 404.7,164.3 403.6,163.2 403.1,161.8 403.1,160.4 403.6,159.0 404.7,157.9 406.1,157.4 407.5,157.4 408.9,157.9 410.0,159.0ZM312.8,181.8 312.4,180.3 311.7,172.0 312.4,169.8 314.0,168.2 316.1,167.5 318.4,167.9 326.1,171.3 327.7,172.9 328.3,175.2 328.1,176.7 327.4,178.1 326.3,179.2 319.3,184.2 317.9,184.6 315.6,184.4 314.2,183.7ZM387.9,172.3 389.7,170.9 397.5,167.6 399.8,167.6 401.8,168.6 402.8,169.8 403.5,172.0 402.7,180.3 402.0,182.5 400.3,184.1 398.8,184.6 397.3,184.6 395.1,183.8 388.8,179.2 387.7,178.1 387.1,176.7 386.9,175.2 387.1,173.7ZM411.6,182.5 410.9,180.3 410.1,172.0 410.8,169.8 411.8,168.6 413.8,167.6 416.1,167.6 423.9,170.9 425.7,172.3 426.7,174.4 426.7,175.9 426.3,177.4 424.8,179.2 418.5,183.8 417.1,184.5 415.5,184.7 414.0,184.4 412.7,183.7Z" fill="#4f8b7e" fill-rule="evenodd" stroke="#24443b" stroke-width="1.4" stroke-linejoin="round" /><path d="M578.5,176.6 579.3,178.2 580.4,179.7 584.7,183.9 588.2,186.4 590.1,187.4 594.7,189.1 595.0,189.4 595.0,189.8 592.5,194.0 591.7,196.0 590.6,200.2 590.1,204.1 590.2,208.0 590.5,209.7 591.3,211.1 592.5,212.1 594.1,212.8 598.0,213.5 601.9,213.7 606.2,213.3 608.4,212.9 612.9,211.2 613.3,211.2 613.6,211.6 614.4,216.4 615.1,218.5 616.9,222.3 619.1,225.7 621.6,228.6 623.0,229.7 624.5,230.2 626.0,230.2 627.7,229.7 631.1,227.8 634.3,225.4 637.3,222.4 638.7,220.6 641.1,216.4 641.4,216.2 641.9,216.3 645.6,219.4 647.4,220.6 651.3,222.4 655.1,223.6 659.0,224.2 660.7,224.1 662.2,223.6 663.4,222.6 664.3,221.1 665.7,217.4 666.6,213.6 667.0,209.3 666.9,207.1 666.1,201.9 666.5,201.7 671.4,201.8 675.7,200.9 681.4,198.8 684.7,196.8 686.0,195.6 686.8,194.3 687.1,192.7 686.9,191.0 686.3,189.2 685.2,186.5 689.0,188.3 691.5,189.1 691.8,189.5 689.3,194.0 688.5,196.0 687.4,200.2 686.9,204.1 687.0,208.0 687.3,209.7 688.1,211.1 689.3,212.1 690.9,212.8 694.8,213.5 698.7,213.7 703.0,213.3 705.2,212.9 709.7,211.2 710.1,211.2 710.4,211.6 711.2,216.4 711.9,218.5 713.7,222.3 717.1,227.2 718.4,228.6 719.8,229.7 721.3,230.2 722.8,230.2 724.5,229.7 726.2,228.8 729.5,226.6 732.6,224.0 734.1,222.4 735.5,220.6 737.9,216.4 738.2,216.2 738.7,216.3 742.4,219.4 744.2,220.6 748.1,222.4 753.9,224.0 755.8,224.2 757.5,224.1 759.0,223.6 760.2,222.6 761.1,221.1 761.9,219.3 763.0,215.5 763.7,211.5 763.8,209.3 763.7,207.1 762.9,201.9 763.3,201.7 768.2,201.8 772.5,200.9 778.2,198.8 781.6,196.8 782.8,195.6 783.6,194.3 783.9,192.7 783.7,191.0 783.1,189.2 781.5,185.6 784.7,187.4 789.3,189.1 789.6,189.5 787.1,194.0 786.3,196.0 785.2,200.2 784.7,204.1 784.8,208.0 785.1,209.7 785.9,211.1 787.1,212.1 788.7,212.8 792.6,213.5 796.5,213.7 800.8,213.3 803.0,212.9 807.5,211.2 807.9,211.2 808.2,211.6 809.0,216.3 809.7,218.4 810.6,220.5 812.6,224.0 814.9,227.2 816.2,228.6 817.6,229.7 819.1,230.2 820.6,230.2 822.3,229.7 824.0,228.8 828.9,225.4 831.9,222.4 833.3,220.6 835.7,216.4 836.0,216.2 836.5,216.3 840.1,219.4 842.0,220.6 844.0,221.6 847.8,223.0 851.7,224.0 853.6,224.2 855.3,224.1 856.8,223.6 858.0,222.6 858.9,221.1 859.7,219.3 861.2,213.6 861.6,209.3 861.5,207.1 860.6,202.3 860.7,201.9 861.1,201.7 866.0,201.8 868.2,201.4 872.3,200.3 876.0,198.8 879.3,196.8 880.6,195.6 881.4,194.3 881.7,192.7 881.5,191.0 880.1,187.3 878.3,183.8 875.9,180.2 874.4,178.6 870.7,175.5 870.5,175.1 870.7,174.7 874.4,171.6 875.9,170.0 878.3,166.5 880.9,161.1 881.5,159.2 881.7,157.5 881.4,155.9 880.6,154.6 879.4,153.4 877.7,152.4 874.2,150.6 870.3,149.3 868.2,148.8 866.0,148.4 861.1,148.5 860.7,148.3 860.6,147.9 861.5,143.1 861.6,140.9 861.2,136.6 860.3,132.8 858.9,129.1 858.0,127.6 856.8,126.6 855.3,126.1 853.6,126.0 849.7,126.6 845.9,127.8 842.0,129.6 840.2,130.8 836.5,133.9 836.0,134.0 835.7,133.8 833.3,129.6 831.9,127.8 828.9,124.8 825.7,122.4 822.3,120.5 820.6,120.0 819.1,120.0 817.6,120.5 816.2,121.6 813.7,124.5 811.5,127.9 809.7,131.7 809.0,133.8 808.2,138.6 807.9,139.0 807.5,139.0 803.0,137.3 800.8,136.9 796.5,136.5 792.6,136.7 788.7,137.4 787.1,138.1 785.9,139.1 785.1,140.5 784.8,142.2 784.7,146.1 785.2,150.0 786.3,154.2 787.1,156.2 789.6,160.7 789.3,161.1 784.7,162.8 781.5,164.6 783.1,161.0 783.7,159.2 783.9,157.5 783.6,155.9 782.8,154.6 781.6,153.4 778.2,151.4 772.5,149.3 768.2,148.4 763.3,148.5 762.9,148.2 763.7,143.1 763.8,140.9 763.4,136.6 762.5,132.8 761.1,129.1 760.2,127.6 759.0,126.6 757.5,126.1 755.8,126.0 751.9,126.6 748.1,127.8 744.2,129.6 742.4,130.8 738.7,133.9 738.2,134.0 737.9,133.8 735.5,129.6 734.1,127.8 731.1,124.8 727.9,122.4 724.5,120.5 722.8,120.0 721.3,120.0 719.8,120.5 718.4,121.6 715.9,124.5 713.7,127.9 711.9,131.7 711.2,133.8 710.4,138.6 710.1,139.0 709.7,139.0 705.2,137.3 703.0,136.9 698.7,136.5 694.8,136.7 690.9,137.4 689.3,138.1 688.1,139.1 687.3,140.5 687.0,142.2 686.9,146.1 687.4,150.0 688.5,154.2 689.3,156.2 691.8,160.7 691.5,161.1 689.0,161.9 685.2,163.7 686.3,161.0 686.9,159.2 687.1,157.5 686.8,155.9 686.0,154.6 684.7,153.4 681.4,151.4 675.7,149.3 671.4,148.4 666.5,148.5 666.1,148.3 666.9,143.1 667.0,140.9 666.6,136.6 665.7,132.8 664.3,129.1 663.4,127.6 662.2,126.6 660.7,126.1 659.0,126.0 655.1,126.6 651.3,127.8 647.4,129.6 645.6,130.8 641.9,133.9 641.4,134.0 641.1,133.8 638.7,129.6 637.3,127.8 634.3,124.8 631.1,122.4 627.7,120.5 626.0,120.0 624.5,120.0 623.0,120.5 621.6,121.6 619.1,124.5 616.9,127.9 615.1,131.7 614.4,133.8 613.6,138.6 613.3,139.0 612.9,139.0 608.4,137.3 606.2,136.9 601.9,136.5 598.0,136.7 594.1,137.4 592.5,138.1 591.3,139.1 590.5,140.5 590.2,142.2 590.1,146.1 590.6,150.0 591.7,154.2 592.5,156.2 595.0,160.4 595.0,160.8 594.7,161.1 590.2,162.8 588.2,163.8 586.4,165.0 583.2,167.6 580.4,170.5 579.3,172.0 578.5,173.6 578.2,175.1ZM772.9,175.5 772.7,175.1 772.9,174.7ZM633.6,149.4 632.4,150.1 629.9,151.0 627.3,151.0 626.0,150.7 623.6,149.6 622.7,148.6 621.8,147.4 620.6,144.6 619.6,139.5 619.6,135.7 620.0,133.9 621.8,130.4 623.0,128.7 624.3,127.5 625.7,126.8 627.2,127.0 628.9,127.7 630.6,128.8 633.4,131.6 635.2,134.8 636.2,138.5 636.6,141.8 636.6,143.4 636.0,146.3 635.4,147.5ZM731.4,148.5 730.4,149.4 728.0,150.6 726.7,151.0 724.1,151.0 721.5,150.2 720.4,149.6 719.5,148.6 717.9,146.1 716.9,143.1 716.4,139.5 716.4,135.7 716.8,133.9 718.6,130.4 719.8,128.7 721.1,127.5 722.5,126.8 724.0,127.0 725.7,127.7 727.4,128.8 730.2,131.6 732.0,134.8 733.0,138.5 733.4,141.8 733.4,143.4 732.8,146.3ZM651.6,155.0 650.3,155.0 647.6,154.4 646.5,153.9 644.4,152.2 642.9,150.0 642.5,148.7 642.4,147.4 642.8,144.5 644.0,141.5 645.9,138.4 648.4,135.5 649.8,134.5 653.4,132.9 655.4,132.4 657.3,132.3 658.7,132.7 659.8,133.7 660.6,135.4 661.2,137.3 661.6,141.3 660.9,144.9 659.3,148.3 657.5,151.1 656.4,152.3 654.1,154.2ZM617.2,155.8 616.8,157.1 615.4,159.4 613.5,161.1 612.2,161.7 609.7,162.3 608.3,162.2 607.0,161.9 604.1,160.5 600.1,157.2 597.7,154.3 596.9,152.7 595.9,148.8 595.8,146.8 596.0,145.0 596.7,143.6 597.9,142.7 599.6,142.2 601.7,142.0 605.6,142.3 609.0,143.6 612.2,145.8 614.6,148.0 615.6,149.3 617.0,151.9 617.4,153.1ZM714.2,154.4 714.0,155.8 713.0,158.3 712.2,159.4 710.3,161.1 707.7,162.2 706.5,162.3 705.1,162.2 702.3,161.3 699.6,159.6 696.9,157.2 694.5,154.3 693.7,152.7 692.7,148.8 692.6,146.8 692.8,145.0 693.5,143.6 694.7,142.7 696.4,142.2 698.5,142.0 702.4,142.3 705.8,143.6 709.0,145.8 711.4,148.0 712.4,149.3 713.8,151.9ZM660.5,170.9 659.4,170.0 657.8,167.9 657.2,166.7 656.7,164.2 657.0,161.4 657.5,160.2 658.3,159.1 660.5,157.2 663.3,155.7 666.7,154.5 670.5,153.9 672.3,154.0 676.1,155.1 677.9,156.0 679.4,157.1 680.2,158.3 680.4,159.8 680.0,161.6 679.1,163.5 676.9,166.8 674.1,169.1 670.6,170.7 667.4,171.7 665.9,171.9 662.9,171.8ZM608.8,171.2 609.3,172.5 609.7,175.1 609.3,177.7 608.8,179.0 607.2,181.1 606.1,181.9 604.8,182.5 601.8,183.2 596.6,183.3 592.8,182.6 591.2,181.9 588.0,179.6 586.6,178.1 585.6,176.5 585.2,175.1 585.6,173.7 586.6,172.1 588.0,170.6 591.2,168.3 594.7,167.1 598.5,166.8 601.8,167.0 603.4,167.3 606.1,168.3 607.2,169.1ZM704.9,170.1 705.6,171.2 706.4,173.8 706.5,175.1 706.1,177.7 704.9,180.1 704.0,181.1 702.9,181.9 700.2,182.9 697.0,183.4 693.4,183.3 689.6,182.6 688.0,181.9 684.8,179.6 683.4,178.1 682.4,176.5 682.0,175.1 682.4,173.7 683.4,172.1 684.8,170.6 688.0,168.3 691.5,167.1 695.3,166.8 698.6,167.0 700.2,167.3 702.9,168.3ZM657.0,188.8 656.8,187.4 656.9,184.7 657.2,183.5 658.5,181.2 660.5,179.3 661.6,178.7 662.9,178.4 665.9,178.3 669.0,178.9 672.3,180.2 675.6,182.2 676.9,183.4 679.1,186.7 680.0,188.6 680.4,190.4 680.2,191.9 679.4,193.1 677.9,194.2 676.1,195.1 672.3,196.2 668.6,196.1 664.9,195.1 661.9,193.8 660.5,193.0 658.3,191.1ZM610.9,188.0 612.2,188.5 614.5,190.0 615.4,190.8 616.8,193.1 617.4,195.8 617.4,197.1 617.0,198.3 615.6,200.9 613.5,203.3 610.7,205.6 607.3,207.4 605.6,207.9 601.7,208.2 599.6,208.0 597.9,207.5 596.7,206.6 596.0,205.2 595.8,203.4 595.9,201.4 596.9,197.5 598.8,194.4 601.5,191.7 604.1,189.7 605.5,188.9 608.3,188.0ZM707.7,188.0 709.0,188.5 711.3,190.0 712.2,190.8 713.6,193.1 714.2,195.8 714.2,197.1 713.8,198.3 712.4,200.9 710.3,203.3 707.5,205.6 704.1,207.4 702.4,207.9 698.5,208.2 696.4,208.0 694.7,207.5 693.5,206.6 692.8,205.2 692.6,203.4 692.7,201.4 693.7,197.5 695.6,194.4 698.3,191.7 700.9,189.7 702.3,188.9 705.1,188.0ZM642.9,200.2 643.6,199.1 645.4,197.0 646.5,196.3 648.9,195.4 651.6,195.2 652.9,195.5 654.1,196.0 656.4,197.9 658.4,200.4 660.1,203.5 661.4,207.2 661.6,208.9 661.2,212.9 660.6,214.8 659.8,216.5 658.7,217.5 657.3,217.9 655.4,217.8 653.4,217.3 649.8,215.7 647.1,213.3 644.8,210.2 643.3,207.2 642.8,205.7 642.4,202.8ZM624.7,200.0 626.0,199.5 628.7,199.1 629.9,199.2 632.4,200.1 634.6,201.7 635.4,202.7 636.0,203.9 636.6,206.8 636.5,210.0 635.8,213.6 634.4,217.1 633.4,218.6 630.6,221.4 628.9,222.5 627.2,223.2 625.7,223.4 624.3,222.7 623.0,221.5 621.8,219.8 620.0,216.3 619.5,212.6 619.8,208.8 620.6,205.6 621.1,204.1 622.7,201.6ZM722.8,199.5 724.1,199.2 726.7,199.2 729.2,200.1 730.4,200.8 732.2,202.7 732.8,203.9 733.2,205.3 733.4,208.4 732.6,213.6 731.2,217.1 730.2,218.6 727.4,221.4 725.7,222.5 724.0,223.2 722.5,223.4 721.1,222.7 719.8,221.5 718.6,219.8 716.8,216.3 716.3,212.6 716.6,208.8 717.4,205.6 717.9,204.1 719.5,201.6 720.4,200.6ZM829.2,148.5 828.2,149.4 825.8,150.6 824.5,151.0 821.9,151.0 819.3,150.2 818.2,149.6 817.3,148.6 815.7,146.1 814.7,143.1 814.2,139.5 814.2,135.7 814.6,133.9 816.4,130.4 817.6,128.7 818.9,127.5 820.3,126.8 821.8,127.0 823.5,127.7 825.2,128.8 828.0,131.6 829.8,134.8 830.8,138.5 831.2,141.8 831.2,143.4 830.6,146.3ZM748.4,155.0 747.1,155.0 744.4,154.4 743.2,153.9 741.2,152.2 739.7,150.0 739.3,148.7 739.2,147.4 739.6,144.5 740.8,141.5 742.7,138.4 745.2,135.5 746.6,134.5 750.2,132.9 752.2,132.4 754.1,132.3 755.5,132.7 756.6,133.7 757.4,135.4 758.0,137.3 758.4,141.3 757.7,144.9 756.1,148.3 754.3,151.1 753.2,152.3 750.9,154.2ZM846.2,155.0 844.9,155.0 842.2,154.4 841.0,153.9 839.0,152.2 837.5,150.0 837.1,148.7 837.0,147.4 837.4,144.5 838.6,141.5 840.5,138.4 843.0,135.5 844.4,134.5 848.0,132.9 850.0,132.4 851.9,132.3 853.3,132.7 854.4,133.7 855.2,135.4 855.8,137.3 856.2,141.3 855.5,144.9 853.9,148.3 852.1,151.1 851.0,152.3 848.7,154.2ZM812.0,154.4 811.8,155.8 810.8,158.3 810.0,159.4 808.1,161.1 805.5,162.2 804.3,162.3 802.9,162.2 800.1,161.3 797.4,159.6 794.7,157.2 792.3,154.3 791.5,152.7 790.5,148.8 790.4,146.8 790.6,145.0 791.3,143.6 792.5,142.7 794.2,142.2 796.3,142.0 800.2,142.3 803.6,143.6 806.8,145.8 809.2,148.0 810.2,149.3 811.6,151.9ZM757.3,170.9 756.2,170.0 754.6,167.9 754.0,166.7 753.5,164.2 753.8,161.4 754.3,160.2 755.1,159.1 757.3,157.2 760.1,155.7 763.5,154.5 767.3,153.9 769.1,154.0 772.9,155.1 774.7,156.0 776.2,157.1 777.0,158.3 777.2,159.8 776.8,161.6 775.9,163.5 773.7,166.8 770.9,169.1 767.4,170.7 764.2,171.7 762.7,171.9 759.7,171.8ZM855.1,170.9 854.0,170.0 852.4,167.9 851.8,166.7 851.3,164.2 851.6,161.4 852.1,160.2 852.9,159.1 855.1,157.2 857.9,155.7 861.3,154.5 865.1,153.9 866.9,154.0 870.7,155.1 872.5,156.0 874.0,157.1 874.8,158.3 875.0,159.8 874.6,161.6 873.7,163.5 871.5,166.8 868.7,169.1 865.2,170.7 862.0,171.7 860.5,171.9 857.5,171.8ZM803.4,171.2 803.9,172.5 804.3,175.1 803.9,177.7 803.4,179.0 801.8,181.1 800.7,181.9 799.4,182.5 796.4,183.2 791.2,183.3 787.4,182.6 785.8,181.9 782.6,179.6 781.2,178.1 780.2,176.5 779.8,175.1 780.2,173.7 781.2,172.1 782.6,170.6 785.8,168.3 789.3,167.1 793.1,166.8 796.4,167.0 798.0,167.3 800.7,168.3 801.8,169.1ZM753.8,188.8 753.6,187.4 753.7,184.7 754.0,183.5 755.3,181.2 757.3,179.3 758.4,178.7 759.7,178.4 762.7,178.3 765.8,178.9 769.1,180.2 772.4,182.2 773.7,183.4 775.9,186.7 776.8,188.6 777.2,190.4 777.0,191.9 776.2,193.1 774.7,194.2 772.9,195.1 769.1,196.2 765.4,196.1 761.7,195.1 758.7,193.8 757.3,193.0 755.1,191.1ZM851.6,188.8 851.4,187.4 851.5,184.7 851.8,183.5 853.1,181.2 855.1,179.3 856.2,178.7 857.5,178.4 860.5,178.3 863.6,178.9 866.9,180.2 870.2,182.2 871.5,183.4 873.7,186.7 874.6,188.6 875.0,190.4 874.8,191.9 874.0,193.1 872.5,194.2 870.7,195.1 866.9,196.2 863.2,196.1 859.5,195.1 856.5,193.8 855.1,193.0 852.9,191.1ZM805.5,188.0 806.8,188.5 809.1,190.0 810.0,190.8 811.4,193.1 812.0,195.8 812.0,197.1 811.6,198.3 810.2,200.9 808.1,203.3 805.3,205.6 801.9,207.4 800.2,207.9 796.3,208.2 794.2,208.0 792.5,207.5 791.3,206.6 790.6,205.2 790.4,203.4 790.5,201.4 791.5,197.5 793.4,194.4 796.1,191.7 798.7,189.7 800.1,188.9 802.9,188.0ZM739.7,200.2 740.4,199.1 742.2,197.0 743.2,196.3 745.7,195.4 748.4,195.2 749.7,195.5 750.9,196.0 753.2,197.9 755.2,200.4 756.9,203.5 758.2,207.2 758.4,208.9 758.0,212.9 757.4,214.8 756.6,216.5 755.5,217.5 754.1,217.9 752.2,217.8 750.2,217.3 746.6,215.7 743.9,213.3 741.6,210.2 740.1,207.2 739.6,205.7 739.2,202.8ZM837.5,200.2 838.2,199.1 840.0,197.0 841.0,196.3 843.5,195.4 846.2,195.2 847.5,195.5 848.7,196.0 851.0,197.9 853.0,200.4 854.7,203.5 856.0,207.2 856.2,208.9 855.8,212.9 855.2,214.8 854.4,216.5 853.3,217.5 851.9,217.9 850.0,217.8 848.0,217.3 844.4,215.7 841.7,213.3 839.4,210.2 837.9,207.2 837.4,205.7 837.0,202.8ZM819.3,200.0 820.6,199.5 823.3,199.1 824.5,199.2 827.0,200.1 829.2,201.7 830.0,202.7 830.6,203.9 831.2,206.8 831.1,210.0 830.4,213.6 829.0,217.1 828.0,218.6 825.2,221.4 823.5,222.5 821.8,223.2 820.3,223.4 818.9,222.7 817.6,221.5 816.4,219.8 814.6,216.3 814.1,212.6 814.4,208.8 815.2,205.6 815.7,204.1 817.3,201.6Z" fill="#82475c" fill-rule="evenodd" stroke="#35202a" stroke-width="1.3" stroke-linejoin="round" /><path d="M467.9,209.9 469.7,211.7 471.0,213.7 471.5,215.2 471.6,216.6 471.2,218.9 470.2,220.9 467.7,224.7 462.9,230.5 461.4,234.9 460.8,237.3 460.6,240.3 460.1,242.0 458.6,244.7 455.9,247.7 449.5,251.2 447.9,251.9 447.4,251.7 447.9,250.6 452.6,245.7 454.6,242.6 455.5,239.9 455.6,235.5 456.2,232.1 457.2,228.8 458.8,225.5 461.9,221.0 463.2,217.9 461.8,217.4 459.1,216.9 454.4,216.9 448.9,217.7 444.7,219.0 442.0,220.8 435.0,227.3 433.0,228.0 432.5,232.4 432.3,239.1 433.6,250.5 434.4,265.6 434.7,276.4 434.6,291.1 434.2,302.6 432.8,328.5 431.5,338.7 429.9,344.3 432.2,343.5 434.4,343.4 436.5,344.2 437.5,345.3 438.0,344.5 439.6,343.7 441.2,343.4 443.3,343.6 445.3,344.4 447.0,345.8 447.9,347.2 448.0,348.7 448.9,348.4 450.6,348.6 452.1,349.3 453.8,350.7 454.9,352.6 455.4,354.7 455.3,356.4 454.5,357.7 455.9,358.3 457.0,359.6 457.7,361.1 458.0,363.2 457.7,365.3 457.0,366.8 455.9,368.1 454.5,368.7 455.1,369.4 455.4,371.2 455.2,372.8 454.4,374.8 453.0,376.4 451.2,377.6 449.5,378.0 448.0,377.7 447.9,379.2 447.0,380.6 445.8,381.7 443.8,382.7 441.7,383.0 440.1,382.9 438.5,382.2 437.5,381.1 436.5,382.2 434.9,382.9 433.3,383.0 431.2,382.7 429.2,381.7 428.0,380.6 427.1,379.2 427.0,377.7 425.5,378.0 423.8,377.6 422.4,376.8 420.9,375.2 419.9,373.3 419.6,371.7 419.7,370.0 420.5,368.7 419.1,368.1 418.0,366.8 417.3,365.3 417.0,363.5 410.9,369.1 407.0,372.1 402.6,375.1 393.2,380.5 386.9,383.3 380.0,385.6 374.2,386.7 371.3,386.8 368.2,386.3 365.5,385.4 364.0,384.7 361.9,383.1 360.9,381.9 359.6,379.7 358.9,377.4 358.9,375.4 359.5,373.0 361.4,369.6 363.6,367.2 365.6,366.2 368.5,365.9 373.5,366.9 376.3,365.4 379.8,363.2 386.2,357.5 389.0,354.4 393.0,348.0 395.1,343.4 396.3,337.6 396.5,332.0 395.0,302.8 393.8,304.0 384.3,311.5 376.8,324.5 372.8,332.7 372.4,333.0 372.0,332.9 371.7,332.6 367.4,318.9 357.1,320.6 356.4,320.3 356.4,319.9 359.8,309.5 352.6,305.1 352.4,304.6 353.3,301.2 353.9,300.7 364.4,300.7 365.5,295.2 362.2,294.1 357.8,288.7 350.9,287.7 350.5,287.5 350.4,286.9 354.5,276.6 345.3,272.9 344.9,272.3 345.2,271.8 347.9,271.1 350.1,263.5 339.4,259.1 338.2,254.0 338.4,253.4 344.7,248.1 338.7,246.5 338.3,246.1 338.3,245.6 338.7,245.3 342.5,243.8 338.8,240.1 338.6,239.7 338.8,239.3 346.0,237.0 338.3,230.9 338.1,230.4 338.4,229.9 348.8,224.0 346.1,215.8 346.1,215.3 346.6,215.0 347.1,215.2 355.2,223.2 365.8,230.5 373.2,234.6 375.4,231.5 369.8,226.0 358.8,219.9 358.6,219.2 359.3,218.4 368.5,216.7 377.0,219.2 379.4,210.7 380.0,210.3 380.5,210.6 386.2,222.0 392.8,219.0 394.3,211.9 394.9,211.4 395.4,211.7 401.3,219.5 403.7,215.2 404.1,215.0 404.5,215.2 405.2,219.6 407.2,215.9 409.8,212.5 413.5,208.4 418.0,204.3 422.8,201.1 430.0,197.2 431.2,197.0 432.2,197.6 437.7,188.6 445.5,177.7 447.8,175.1 448.2,175.6 447.2,178.5 442.1,191.0 438.5,198.5 437.3,201.5 435.7,208.2 434.6,216.0 437.4,213.2 440.5,211.0 444.9,208.9 450.8,207.3 457.1,206.8 461.7,207.2 464.6,208.0ZM397.8,224.5 389.8,226.0 383.8,230.5 381.3,237.0 381.9,243.8 385.2,256.9 390.7,271.1 393.8,277.5 394.2,266.1 395.3,257.0 400.4,233.8 403.8,222.9ZM373.3,240.4 372.0,238.3 370.8,237.2 369.6,236.7 368.2,236.6 364.7,236.8 360.2,237.7 355.0,239.5 349.1,242.1 347.9,243.2 348.7,244.2 351.0,245.0 356.8,246.5 372.1,249.0 375.9,249.3 376.4,249.0 376.4,248.1 374.7,243.2ZM383.1,261.3 381.6,258.1 379.8,255.8 377.8,254.6 375.5,254.0 373.1,253.9 370.9,254.2 368.9,254.8 367.1,255.8 365.3,257.2 360.8,261.9 355.6,268.7 354.5,271.1 355.1,272.1 356.9,272.3 365.5,271.2 376.4,269.0 385.3,268.3 385.5,267.9 385.2,266.8ZM394.3,289.9 389.1,278.0 387.7,275.3 386.3,273.3 384.9,272.1 383.5,271.5 382.1,271.5 380.8,272.2 379.7,273.5 378.7,275.4 376.4,281.0 372.1,290.3 370.2,295.1 369.8,298.5 371.5,299.9 374.5,299.9 381.9,299.1 390.0,299.7 393.8,299.6 394.4,299.3 394.7,298.6ZM365.8,378.0 366.7,378.8 368.0,379.4 370.8,379.9 369.0,378.8 368.4,377.5 367.3,376.5 366.2,377.0 365.1,376.9ZM424.5,335.1 425.8,324.9 426.8,310.0 427.6,287.3 427.7,276.4 427.4,265.6 426.8,253.0 426.2,247.3 423.9,253.8 423.0,257.6 422.3,262.3 422.0,267.8 422.0,280.0 421.4,325.0 420.9,335.1ZM425.4,234.7 426.1,226.8 427.4,217.3 429.1,206.9 430.4,202.0 424.8,206.7 419.6,211.9 416.4,215.6 413.4,220.1 411.6,224.1 410.2,228.3 407.8,237.2 405.7,246.8 403.2,260.7 402.4,272.3 402.4,283.2 403.4,315.6 404.1,321.2 403.8,325.7 403.6,335.1 406.7,335.1 406.9,332.1 407.9,270.6 408.1,267.6 409.5,260.4 410.9,254.6 411.4,254.1 412.2,254.1 412.7,254.6 412.8,256.0 412.5,269.4 412.8,280.0 412.1,325.1 411.7,335.1 413.4,335.1 413.9,325.0 414.8,269.9 415.4,261.3 416.7,254.8 418.8,248.8 421.6,244.1 425.3,239.2ZM426.8,366.8 427.7,368.9 429.0,370.7 430.6,372.2 432.5,373.3 434.6,374.1 436.8,374.5 439.0,374.4 441.1,373.9 443.1,373.0 445.0,371.7 446.5,370.1 447.6,368.2 448.4,366.1 448.8,363.9 448.7,361.7 448.2,359.6 447.3,357.6 446.0,355.7 444.4,354.2 442.5,353.1 440.4,352.3 438.2,351.9 436.0,352.0 433.9,352.5 431.8,353.4 430.0,354.7 428.5,356.3 427.4,358.2 426.6,360.3 426.2,362.5 426.3,364.7ZM400.3,387.5 401.3,385.9 402.5,385.2 402.1,383.5 402.2,382.4 402.6,381.3 403.4,380.0 404.5,379.0 406.0,378.4 407.2,378.3 408.2,378.7 408.2,378.1 408.6,377.2 410.3,375.7 412.1,375.1 413.7,375.1 415.5,375.8 416.7,377.0 418.3,376.2 420.2,376.3 421.6,376.8 422.8,377.8 423.9,379.4 424.0,381.2 425.2,381.5 426.3,382.1 427.1,382.9 427.9,384.2 428.3,385.7 428.2,387.2 427.6,388.7 426.7,389.4 427.6,390.1 428.1,391.2 428.3,392.4 428.2,393.9 427.6,395.3 426.6,396.4 425.6,397.1 424.0,397.6 424.1,398.6 423.5,400.1 422.8,401.0 421.6,402.0 420.2,402.5 419.1,402.6 417.5,402.3 416.7,401.8 415.5,403.0 414.4,403.5 413.3,403.7 411.8,403.7 410.3,403.1 409.1,402.2 408.4,401.2 408.2,400.1 407.2,400.5 405.6,400.3 404.2,399.6 403.1,398.5 402.4,397.2 402.1,396.1 402.2,394.8 402.5,393.6 401.0,392.6 400.0,390.5 399.9,389.0ZM407.6,391.7 409.0,394.1 411.2,395.9 413.9,396.6 416.7,396.2 419.1,394.8 420.9,392.6 421.6,389.9 421.2,387.1 419.8,384.7 417.6,382.9 414.9,382.2 412.1,382.6 409.7,384.0 407.9,386.2 407.2,388.9Z" fill="#c9e3f5" fill-rule="evenodd" stroke="#45525c" stroke-width="1.2" stroke-linejoin="round" /><path d="M110.9,209.9 109.1,211.7 107.8,213.7 107.3,215.2 107.2,216.6 107.6,218.9 108.6,220.9 111.1,224.7 115.9,230.5 117.4,234.9 118.0,237.3 118.2,240.3 118.7,242.0 120.2,244.7 122.9,247.7 129.3,251.2 130.9,251.9 131.4,251.7 130.9,250.6 126.2,245.7 124.2,242.6 123.3,239.9 123.2,235.5 122.6,232.1 121.6,228.8 120.0,225.5 116.9,221.0 115.6,217.9 117.0,217.4 119.7,216.9 124.4,216.9 129.9,217.7 134.1,219.0 136.8,220.8 143.8,227.3 145.8,228.0 146.3,232.4 146.5,239.1 145.2,250.5 144.4,265.6 144.1,276.4 144.2,291.1 144.6,302.6 146.0,328.5 147.3,338.7 148.9,344.3 146.6,343.5 144.4,343.4 142.3,344.2 141.3,345.3 140.8,344.5 139.2,343.7 137.6,343.4 135.5,343.6 133.5,344.4 131.8,345.8 130.9,347.2 130.8,348.7 129.9,348.4 128.2,348.6 126.7,349.3 125.0,350.7 123.9,352.6 123.4,354.7 123.5,356.4 124.3,357.7 122.9,358.3 121.8,359.6 121.1,361.1 120.8,363.2 121.1,365.3 121.8,366.8 122.9,368.1 124.3,368.7 123.7,369.4 123.4,371.2 123.6,372.8 124.4,374.8 125.8,376.4 127.6,377.6 129.3,378.0 130.8,377.7 130.9,379.2 131.8,380.6 133.0,381.7 135.0,382.7 137.1,383.0 138.7,382.9 140.3,382.2 141.3,381.1 142.3,382.2 143.9,382.9 145.5,383.0 147.6,382.7 149.6,381.7 150.8,380.6 151.7,379.2 151.8,377.7 153.3,378.0 155.0,377.6 156.4,376.8 157.9,375.2 158.9,373.3 159.2,371.7 159.1,370.0 158.3,368.7 159.7,368.1 160.8,366.8 161.5,365.3 161.8,363.5 167.9,369.1 171.8,372.1 176.2,375.1 185.6,380.5 191.9,383.3 198.8,385.6 204.6,386.7 207.5,386.8 210.6,386.3 213.3,385.4 214.8,384.7 216.9,383.1 217.9,381.9 219.2,379.7 219.9,377.4 219.9,375.4 219.3,373.0 217.4,369.6 215.2,367.2 213.2,366.2 210.3,365.9 205.3,366.9 202.5,365.4 199.0,363.2 192.6,357.5 189.8,354.4 185.8,348.0 183.7,343.4 182.5,337.6 182.3,332.0 183.8,302.8 185.0,304.0 194.5,311.5 202.0,324.5 206.0,332.7 206.4,333.0 206.8,332.9 207.1,332.6 211.4,318.9 221.7,320.6 222.4,320.3 222.4,319.9 219.0,309.5 226.2,305.1 226.4,304.6 225.5,301.2 224.9,300.7 214.4,300.7 213.3,295.2 216.6,294.1 221.0,288.7 227.9,287.7 228.3,287.5 228.4,286.9 224.3,276.6 233.5,272.9 233.9,272.3 233.6,271.8 230.9,271.1 228.7,263.5 239.4,259.1 240.6,254.0 240.4,253.4 234.1,248.1 240.1,246.5 240.5,246.1 240.5,245.6 240.1,245.3 236.3,243.8 240.0,240.1 240.2,239.7 240.0,239.3 232.8,237.0 240.5,230.9 240.7,230.4 240.4,229.9 230.0,224.0 232.7,215.8 232.7,215.3 232.2,215.0 231.7,215.2 223.6,223.2 213.0,230.5 205.6,234.6 203.4,231.5 209.0,226.0 220.0,219.9 220.2,219.2 219.5,218.4 210.3,216.7 201.8,219.2 199.4,210.7 198.8,210.3 198.3,210.6 192.6,222.0 186.0,219.0 184.5,211.9 183.9,211.4 183.4,211.7 177.5,219.5 175.1,215.2 174.7,215.0 174.3,215.2 173.6,219.6 171.6,215.9 169.0,212.5 165.3,208.4 160.8,204.3 156.0,201.1 148.8,197.2 147.6,197.0 146.6,197.6 141.1,188.6 133.3,177.7 131.0,175.1 130.6,175.6 131.6,178.5 136.7,191.0 140.3,198.5 141.5,201.5 143.1,208.2 144.2,216.0 141.4,213.2 138.3,211.0 133.9,208.9 128.0,207.3 121.7,206.8 117.1,207.2 114.2,208.0ZM181.0,224.5 189.0,226.0 195.0,230.5 197.5,237.0 196.9,243.8 193.6,256.9 188.1,271.1 185.0,277.5 184.6,266.1 183.5,257.0 178.4,233.8 175.0,222.9ZM205.5,240.4 206.8,238.3 208.0,237.2 209.2,236.7 210.6,236.6 214.1,236.8 218.6,237.7 223.8,239.5 229.7,242.1 230.9,243.2 230.1,244.2 227.8,245.0 222.0,246.5 206.7,249.0 202.9,249.3 202.4,249.0 202.4,248.1 204.1,243.2ZM195.7,261.3 197.2,258.1 199.0,255.8 201.0,254.6 203.3,254.0 205.7,253.9 207.9,254.2 209.9,254.8 211.7,255.8 213.5,257.2 218.0,261.9 223.2,268.7 224.3,271.1 223.7,272.1 221.9,272.3 213.3,271.2 202.4,269.0 193.5,268.3 193.3,267.9 193.6,266.8ZM184.5,289.9 189.7,278.0 191.1,275.3 192.5,273.3 193.9,272.1 195.3,271.5 196.7,271.5 198.0,272.2 199.1,273.5 200.1,275.4 202.4,281.0 206.7,290.3 208.6,295.1 209.0,298.5 207.3,299.9 204.2,299.9 196.9,299.1 188.8,299.7 185.0,299.6 184.4,299.3 184.1,298.6ZM213.0,378.0 212.1,378.8 210.8,379.4 208.0,379.9 209.8,378.8 210.4,377.5 211.5,376.5 212.6,377.0 213.7,376.9ZM154.3,335.1 153.0,324.9 152.0,310.0 151.2,287.3 151.1,276.4 151.4,265.6 152.0,253.0 152.6,247.3 154.9,253.8 155.8,257.6 156.5,262.3 156.8,267.8 156.8,280.0 157.4,325.0 157.9,335.1ZM153.4,234.7 152.7,226.8 151.4,217.3 149.7,206.9 148.4,202.0 154.0,206.7 159.2,211.9 162.4,215.6 165.4,220.1 167.2,224.1 168.6,228.3 171.0,237.2 173.1,246.8 175.6,260.7 176.4,272.3 176.4,283.2 175.4,315.6 174.7,321.2 175.0,325.7 175.2,335.1 172.1,335.1 171.9,332.1 170.9,270.6 170.7,267.6 169.3,260.4 167.9,254.6 167.4,254.1 166.6,254.1 166.1,254.6 166.0,256.0 166.3,269.4 166.0,280.0 166.7,325.1 167.1,335.1 165.4,335.1 164.9,325.0 164.0,269.9 163.4,261.3 162.1,254.8 160.0,248.8 157.2,244.1 153.5,239.2ZM152.0,366.8 151.1,368.9 149.8,370.7 148.2,372.2 146.3,373.3 144.2,374.1 142.0,374.5 139.8,374.4 137.7,373.9 135.7,373.0 133.8,371.7 132.3,370.1 131.2,368.2 130.4,366.1 130.0,363.9 130.1,361.7 130.6,359.6 131.5,357.6 132.8,355.7 134.4,354.2 136.3,353.1 138.4,352.3 140.6,351.9 142.8,352.0 144.9,352.5 147.0,353.4 148.8,354.7 150.3,356.3 151.4,358.2 152.2,360.3 152.6,362.5 152.5,364.7ZM178.5,387.5 177.5,385.9 176.3,385.2 176.7,383.5 176.6,382.4 176.2,381.3 175.4,380.0 174.3,379.0 172.8,378.4 171.6,378.3 170.6,378.7 170.6,378.1 170.2,377.2 168.5,375.7 166.7,375.1 165.1,375.1 163.3,375.8 162.1,377.0 160.5,376.2 158.6,376.3 157.2,376.8 156.0,377.8 154.9,379.4 154.8,381.2 153.6,381.5 152.5,382.1 151.7,382.9 150.9,384.2 150.5,385.7 150.6,387.2 151.2,388.7 152.1,389.4 151.2,390.1 150.7,391.2 150.5,392.4 150.6,393.9 151.2,395.3 152.2,396.4 153.2,397.1 154.8,397.6 154.7,398.6 155.3,400.1 156.0,401.0 157.2,402.0 158.6,402.5 159.7,402.6 161.3,402.3 162.1,401.8 163.3,403.0 164.4,403.5 165.5,403.7 167.0,403.7 168.5,403.1 169.7,402.2 170.4,401.2 170.6,400.1 171.6,400.5 173.2,400.3 174.6,399.6 175.7,398.5 176.4,397.2 176.7,396.1 176.6,394.8 176.3,393.6 177.8,392.6 178.8,390.5 178.9,389.0ZM171.2,391.7 169.8,394.1 167.6,395.9 164.9,396.6 162.1,396.2 159.7,394.8 157.9,392.6 157.2,389.9 157.6,387.1 159.0,384.7 161.2,382.9 163.9,382.2 166.7,382.6 169.1,384.0 170.9,386.2 171.6,388.9Z" fill="#c9e3f5" fill-rule="evenodd" stroke="#45525c" stroke-width="1.2" stroke-linejoin="round" /><path d="M153.5,312.0 153.6,314.0 153.6,316.7 153.7,320.0 153.9,323.5 154.1,326.9 154.5,330.0 155.0,332.8 155.5,335.6 156.1,338.2 156.9,340.9 157.8,343.5 159.0,346.0 160.4,348.5 162.0,350.9 163.8,353.2 165.7,355.6 167.8,357.8 170.0,360.0 172.4,362.2 175.0,364.4 177.8,366.5 180.6,368.5 183.3,370.4 186.0,372.0 188.7,373.4 191.6,374.7 194.5,375.8 197.1,376.7 199.4,377.4 201.0,378.0M425.3,312.0 425.2,314.0 425.2,316.7 425.1,320.0 424.9,323.5 424.7,326.9 424.3,330.0 423.8,332.8 423.3,335.6 422.7,338.2 421.9,340.9 421.0,343.5 419.8,346.0 418.4,348.5 416.8,350.9 415.0,353.2 413.1,355.6 411.0,357.8 408.8,360.0 406.4,362.2 403.8,364.4 401.0,366.5 398.2,368.5 395.5,370.4 392.8,372.0 390.1,373.4 387.2,374.7 384.3,375.8 381.7,376.7 379.4,377.4 377.8,378.0M165.0,312.0 165.0,314.0 164.9,316.7 164.9,320.0 164.9,323.5 165.1,326.9 165.5,330.0 166.1,332.8 166.8,335.7 167.7,338.4 168.6,341.1 169.8,343.6 171.0,346.0 172.4,348.1 173.9,350.1 175.5,351.9 177.2,353.7 179.0,355.3 181.0,357.0 183.1,358.7 185.5,360.3 188.0,361.9 190.5,363.4 192.9,364.8 195.0,366.0 197.0,367.1 199.0,368.1 200.9,369.1 202.6,369.9 204.0,370.5 205.0,371.0M413.8,312.0 413.8,314.0 413.9,316.7 413.9,320.0 413.9,323.5 413.7,326.9 413.3,330.0 412.7,332.8 412.0,335.7 411.1,338.4 410.2,341.1 409.0,343.6 407.8,346.0 406.4,348.1 404.9,350.1 403.3,351.9 401.6,353.7 399.8,355.3 397.8,357.0 395.7,358.7 393.3,360.3 390.8,361.9 388.3,363.4 385.9,364.8 383.8,366.0 381.8,367.1 379.8,368.1 377.9,369.1 376.2,369.9 374.8,370.5 373.8,371.0M174.5,312.0 174.5,314.0 174.5,316.8 174.4,320.1 174.5,323.6 174.7,327.0 175.0,330.0 175.5,332.7 176.1,335.4 176.9,337.9 177.8,340.4 178.8,342.8 180.0,345.0 181.4,347.1 182.9,349.1 184.6,351.0 186.3,352.7 188.2,354.4 190.0,356.0 192.0,357.5 194.3,359.0 196.6,360.4 198.8,361.7 200.7,362.7 202.0,363.5M404.3,312.0 404.3,314.0 404.3,316.8 404.4,320.1 404.3,323.6 404.1,327.0 403.8,330.0 403.3,332.7 402.7,335.4 401.9,337.9 401.0,340.4 400.0,342.8 398.8,345.0 397.4,347.1 395.9,349.1 394.2,351.0 392.5,352.7 390.6,354.4 388.8,356.0 386.8,357.5 384.5,359.0 382.2,360.4 380.0,361.7 378.1,362.7 376.8,363.5" fill="none" stroke="#4a5862" stroke-width="1" stroke-linecap="round"/><path d="M136.2,420.0 138.1,422.7 137.9,423.2 136.2,425.6 137.7,429.1 140.6,430.9 144.6,430.1 148.7,428.0 149.3,428.1 150.3,429.9 150.3,430.4 146.3,433.0 143.6,436.1 143.7,439.6 146.0,442.5 149.2,442.3 149.6,442.6 150.8,445.3 154.5,445.9 157.6,444.1 158.9,440.3 159.1,435.7 159.5,435.3 161.6,435.3 162.0,435.5 162.3,440.3 163.6,444.1 166.6,445.8 170.4,445.3 171.6,442.6 172.0,442.3 175.2,442.5 177.5,439.6 177.6,436.1 174.9,433.0 170.9,430.4 170.9,429.9 171.9,428.2 172.3,427.9 176.6,430.1 180.6,430.9 183.9,428.8 187.5,428.9 187.8,429.4 186.9,432.2 186.6,435.5 187.3,438.7 188.3,441.0 190.3,443.6 192.3,445.2 195.2,446.7 198.5,447.3 201.8,447.1 204.9,446.1 207.1,444.7 209.9,442.0 213.4,445.2 215.6,446.4 217.2,446.9 218.8,447.3 221.3,447.3 223.0,447.1 225.3,446.4 227.5,445.2 229.5,443.6 231.0,441.7 232.2,439.5 232.9,437.1 233.2,434.7 232.9,432.2 232.0,429.4 232.2,428.9 235.7,428.8 239.1,430.9 243.1,430.1 247.3,427.9 247.8,428.2 248.8,429.9 248.8,430.4 244.8,433.0 242.1,436.1 242.1,439.5 244.4,442.5 247.4,442.2 247.9,442.4 249.3,445.3 253.0,445.9 256.1,444.2 257.4,440.3 257.6,435.7 258.0,435.3 260.1,435.3 260.5,435.5 260.7,440.3 262.0,444.1 265.1,445.8 268.8,445.3 270.1,442.6 270.4,442.3 273.7,442.5 276.0,439.6 276.1,436.1 273.3,433.0 269.4,430.4 269.3,429.9 270.3,428.2 270.8,427.9 275.0,430.1 279.0,430.9 282.4,428.8 286.0,428.9 286.2,429.4 285.3,432.2 285.1,434.7 285.3,437.1 286.0,439.5 287.2,441.7 288.8,443.6 290.7,445.2 292.9,446.4 295.3,447.1 296.9,447.3 299.4,447.3 301.1,446.9 303.4,446.1 304.8,445.2 308.4,442.0 311.2,444.7 314.1,446.4 315.7,446.9 318.1,447.3 321.4,447.1 323.8,446.4 326.7,444.7 328.5,443.0 330.3,440.3 331.2,437.9 331.6,434.7 331.4,432.2 330.5,429.4 330.7,428.9 334.2,428.8 337.5,430.9 341.5,430.1 345.8,427.9 346.2,428.2 347.2,429.9 347.2,430.4 343.2,433.0 340.5,436.1 340.6,439.6 342.9,442.5 346.1,442.3 346.5,442.6 347.7,445.3 351.5,445.8 354.5,444.1 355.8,440.3 356.1,435.5 356.5,435.3 358.6,435.3 359.0,435.7 359.2,440.3 360.5,444.1 363.6,445.9 367.3,445.3 368.5,442.6 368.9,442.3 372.1,442.5 374.4,439.6 374.5,436.1 371.8,433.0 367.8,430.4 367.8,429.9 368.8,428.2 369.2,427.9 373.5,430.1 377.5,430.9 380.8,428.8 384.5,428.9 384.7,429.4 383.8,432.2 383.5,434.7 383.8,437.1 384.5,439.5 385.7,441.7 387.2,443.6 389.2,445.2 391.4,446.4 393.7,447.1 395.4,447.3 397.9,447.3 399.5,446.9 401.8,446.1 403.3,445.2 406.8,442.0 409.6,444.7 411.8,446.0 414.1,446.9 417.4,447.4 420.7,446.9 423.7,445.7 426.4,443.6 428.4,441.0 429.6,437.9 430.1,435.5 430.1,433.8 429.4,430.6 427.7,426.9 431.6,424.6 434.0,422.3 435.3,420.2 435.9,418.6 436.5,416.2 436.6,414.5 436.4,412.1 435.3,408.9 434.0,406.8 431.7,404.5 429.5,403.1 426.4,402.1 423.1,401.9 419.7,402.4 419.5,402.0 419.3,399.6 418.5,397.2 417.4,395.0 415.8,393.1 413.2,391.1 410.9,390.1 408.5,389.5 406.0,389.4 403.5,389.8 401.2,390.7 399.1,392.0 397.3,393.7 395.8,395.7 395.1,397.2 394.3,399.6 393.9,402.3 393.6,402.4 390.5,401.9 388.0,401.9 384.8,402.8 382.6,404.0 380.1,406.2 378.7,408.2 377.4,411.2 376.8,414.8 373.5,415.5 369.3,417.7 368.8,417.4 367.8,415.7 367.8,415.2 371.8,412.6 374.5,409.5 374.4,406.0 372.1,403.1 368.9,403.3 368.5,403.0 367.3,400.3 363.5,399.8 360.5,401.5 359.2,405.3 358.9,410.1 358.5,410.3 356.5,410.3 356.0,409.9 355.8,405.3 354.5,401.4 351.5,399.7 347.7,400.3 346.3,403.2 345.8,403.4 342.9,403.1 340.5,406.1 340.5,409.5 343.2,412.6 347.2,415.2 347.2,415.7 346.2,417.4 345.7,417.7 341.5,415.5 338.3,414.8 337.7,411.3 336.9,408.9 335.0,406.2 333.2,404.5 330.3,402.8 327.9,402.1 324.6,401.9 321.3,402.4 321.0,402.0 320.8,399.6 320.1,397.2 318.9,395.0 317.3,393.1 315.4,391.5 313.2,390.4 310.8,389.6 308.3,389.4 305.9,389.6 303.5,390.4 301.3,391.5 299.4,393.1 297.8,395.0 296.6,397.2 295.9,399.6 295.7,402.0 295.4,402.4 292.1,401.9 288.8,402.1 286.4,402.8 283.5,404.5 281.7,406.2 279.8,408.9 279.0,411.3 278.4,414.8 275.0,415.5 270.9,417.7 270.3,417.4 269.3,415.7 269.4,415.2 273.3,412.6 276.1,409.5 276.0,406.0 273.7,403.1 270.4,403.3 270.1,403.0 268.8,400.3 265.1,399.8 262.0,401.5 260.7,405.3 260.5,410.1 260.1,410.3 258.0,410.3 257.6,409.9 257.4,405.3 256.1,401.4 253.0,399.7 249.3,400.3 247.9,403.2 247.4,403.4 244.4,403.1 242.1,406.1 242.1,409.5 244.8,412.6 248.8,415.2 248.8,415.7 247.8,417.4 247.3,417.7 243.1,415.5 239.9,414.8 239.3,411.3 238.4,408.9 236.6,406.2 234.7,404.5 231.9,402.8 229.5,402.1 226.2,401.9 222.8,402.4 222.6,402.0 222.4,399.6 221.6,397.2 220.5,395.0 218.9,393.1 217.0,391.5 214.8,390.4 212.4,389.6 209.9,389.4 207.4,389.6 205.0,390.4 202.8,391.5 200.9,393.1 199.3,395.0 198.2,397.2 197.4,399.6 197.2,402.0 197.0,402.4 193.6,401.9 190.3,402.1 187.9,402.8 185.1,404.5 183.2,406.2 181.4,408.9 180.5,411.3 179.9,414.8 176.6,415.5 172.4,417.7 171.9,417.4 170.9,415.7 170.9,415.2 174.9,412.6 177.6,409.5 177.5,406.0 175.2,403.1 172.0,403.3 171.6,403.0 170.4,400.3 166.6,399.8 163.6,401.5 162.3,405.3 162.0,410.1 161.6,410.3 159.6,410.3 159.1,409.9 158.9,405.3 157.6,401.4 154.6,399.7 150.8,400.3 149.4,403.2 148.9,403.4 146.0,403.1 143.6,406.1 143.6,409.5 146.3,412.6 150.3,415.2 150.3,415.7 149.3,417.5 148.7,417.6 144.6,415.5 140.6,414.7 137.6,416.5ZM361.9,424.0 361.1,425.6 359.8,426.8 358.1,427.4 356.3,427.2 354.7,426.4 353.5,425.1 352.9,423.4 353.1,421.6 353.9,420.0 355.2,418.8 356.9,418.2 358.7,418.4 360.3,419.2 361.5,420.5 362.1,422.2ZM263.5,424.0 262.7,425.6 261.3,426.8 259.6,427.4 257.8,427.2 256.2,426.4 255.1,425.1 254.5,423.4 254.6,421.6 255.4,420.0 256.8,418.8 258.5,418.2 260.3,418.4 261.9,419.2 263.0,420.5 263.6,422.2ZM165.0,424.0 164.2,425.6 162.9,426.8 161.2,427.4 159.4,427.2 157.8,426.4 156.6,425.1 156.0,423.4 156.2,421.6 157.0,420.0 158.3,418.8 160.0,418.2 161.8,418.4 163.4,419.2 164.6,420.5 165.2,422.2ZM218.5,400.7 217.9,402.1 213.6,409.4 211.8,410.7 209.5,411.1 207.4,410.4 205.8,408.7 201.5,401.4 201.2,399.2 202.0,397.0 203.1,395.9 204.5,395.1 206.0,394.9 214.6,395.0 216.0,395.5 217.8,397.0 218.4,398.4ZM316.9,400.7 316.4,402.1 312.0,409.4 310.2,410.7 308.0,411.1 305.8,410.4 304.2,408.7 300.0,401.4 299.7,399.2 300.5,397.0 301.6,395.9 302.9,395.1 304.5,394.9 313.0,395.0 315.1,395.9 316.2,397.0 317.0,399.2ZM194.1,405.9 195.3,406.9 200.8,413.3 201.6,415.4 201.2,417.7 199.9,419.5 197.8,420.5 189.6,422.3 187.3,421.9 185.5,420.4 184.8,419.1 184.5,417.6 184.7,416.0 187.4,407.9 189.0,406.2 190.4,405.5 192.7,405.4ZM231.0,422.3 229.5,422.2 221.2,420.3 219.4,419.0 218.4,417.0 218.4,414.7 219.4,412.7 225.1,406.4 227.1,405.4 228.7,405.3 230.2,405.8 232.0,407.2 232.7,408.6 235.3,416.8 235.0,419.1 234.3,420.4 233.2,421.5ZM292.6,405.9 293.8,406.9 299.3,413.3 300.0,415.4 299.7,417.7 298.3,419.5 296.3,420.5 288.0,422.3 285.8,421.9 284.5,421.0 283.5,419.8 282.9,417.6 283.2,416.0 285.9,407.9 287.4,406.2 288.8,405.5 291.1,405.4ZM213.6,419.4 213.6,420.8 213.1,422.2 212.0,423.3 210.6,423.8 209.2,423.8 207.8,423.3 206.7,422.2 206.2,420.8 206.2,419.4 206.7,418.0 207.8,416.9 209.2,416.4 210.6,416.4 212.0,416.9 213.1,418.0ZM191.5,430.7 192.8,429.9 200.6,426.6 202.9,426.6 204.9,427.6 206.2,429.5 206.6,431.7 205.7,440.1 204.6,442.1 203.4,443.1 201.9,443.6 199.6,443.5 198.2,442.8 191.3,437.7 190.4,436.4 190.0,434.2 190.2,432.7ZM214.7,441.5 214.0,439.3 213.2,431.0 213.6,429.5 214.9,427.6 216.9,426.6 219.2,426.6 227.0,429.9 228.8,431.3 229.6,432.7 229.8,434.2 229.6,435.7 229.0,437.1 227.9,438.2 221.6,442.8 220.2,443.5 217.9,443.6 216.4,443.1ZM289.5,431.3 291.3,429.9 299.1,426.6 301.3,426.6 303.4,427.6 304.3,428.8 305.0,431.0 304.3,439.3 303.5,441.5 302.5,442.7 300.4,443.6 298.1,443.5 296.7,442.8 290.4,438.2 289.3,437.1 288.6,435.7 288.4,434.2 288.7,432.7ZM415.4,400.7 414.8,402.1 410.5,409.4 408.7,410.7 406.4,411.1 404.3,410.4 402.7,408.7 398.4,401.4 398.1,399.2 398.9,397.0 400.0,395.9 401.4,395.1 402.9,394.9 411.5,395.0 413.6,395.9 414.7,397.0 415.5,399.2ZM329.5,422.3 327.9,422.2 319.7,420.3 317.8,419.0 316.8,417.0 316.8,414.7 317.9,412.7 323.5,406.4 325.6,405.4 327.1,405.3 328.6,405.8 330.4,407.2 331.1,408.6 333.7,416.8 333.5,419.1 332.8,420.4 331.6,421.5ZM391.0,405.9 392.2,406.9 397.7,413.3 398.5,415.4 398.1,417.7 396.8,419.5 394.7,420.5 386.5,422.3 384.2,421.9 382.9,421.0 382.0,419.8 381.4,417.6 381.6,416.0 384.3,407.9 385.9,406.2 387.3,405.5 389.6,405.4ZM427.9,422.3 426.4,422.2 418.1,420.3 416.3,419.0 415.3,417.0 415.3,414.7 416.3,412.7 422.0,406.4 424.0,405.4 425.6,405.3 427.1,405.8 428.9,407.2 429.6,408.6 432.2,416.8 431.9,419.1 431.2,420.4 430.1,421.5ZM312.1,419.4 312.1,420.8 311.5,422.2 310.5,423.3 309.1,423.8 307.6,423.8 306.2,423.3 305.2,422.2 304.6,420.8 304.6,419.4 305.2,418.0 306.2,416.9 307.6,416.4 309.1,416.4 310.5,416.9 311.5,418.0ZM410.5,419.4 410.5,420.8 410.0,422.2 408.9,423.3 407.5,423.8 406.1,423.8 404.7,423.3 403.6,422.2 403.1,420.8 403.1,419.4 403.6,418.0 404.7,416.9 406.1,416.4 407.5,416.4 408.9,416.9 410.0,418.0ZM312.8,440.8 312.4,439.3 311.7,431.0 312.4,428.8 314.0,427.2 316.1,426.5 318.4,426.9 326.1,430.3 327.7,431.9 328.3,434.2 328.1,435.7 327.4,437.1 326.3,438.2 319.3,443.2 317.1,443.7 315.6,443.4 313.6,442.1ZM387.9,431.3 389.7,429.9 397.5,426.6 399.8,426.6 401.8,427.6 402.8,428.8 403.5,431.0 402.7,439.3 402.0,441.5 400.3,443.1 398.8,443.6 396.5,443.5 395.1,442.8 388.8,438.2 387.7,437.1 387.1,435.7 386.9,434.2 387.1,432.7ZM411.6,441.5 410.9,439.3 410.1,431.0 410.8,428.8 411.8,427.6 413.8,426.6 416.1,426.6 423.9,429.9 425.7,431.3 426.5,432.7 426.7,434.2 426.5,435.7 425.9,437.1 424.8,438.2 418.5,442.8 417.1,443.5 414.8,443.6 412.7,442.7Z" fill="#4f8b7e" fill-rule="evenodd" stroke="#24443b" stroke-width="1.4" stroke-linejoin="round" /><g fill="none" stroke="#7a7a6a" stroke-width="1.5"><rect x="136.5" y="388.5" width="301.5" height="60.5"/></g><g fill="#fafafa" stroke="#8a8a7a" stroke-width="1"><rect x="132.5" y="384.5" width="8" height="8"/><rect x="434" y="384.5" width="8" height="8"/><rect x="132.5" y="445" width="8" height="8"/><rect x="434" y="445" width="8" height="8"/></g><rect x="270" y="358.5" width="34" height="18" fill="#fff"/><text x="287" y="371" font-size="9px" fill="#555" text-anchor="middle" font-family="Liberation Sans">5.375"</text><text x="462" y="419" font-size="9px" fill="#555" font-family="Liberation Sans">1.081"</text><path d="M514.8 192.8 L514.8 210.6 L518.9 206.7 L522.2 214.2 L525.3 212.9 L522.1 205.6 L527.8 205.4 Z" fill="#222" stroke="#fff" stroke-width="0.8"/></svg></div>
<div id="vsb" class="a"></div>
<div id="hsb" class="a"></div>


<!-- SCROLLBARS -->
<div class="a" style="left:985px;top:77px;width:13px;height:562px;background:#f1f1f1"></div>
<svg class="a" style="left:988px;top:81px" width="8" height="5"><path d="M0.5 4.5H7.5L4 0.5Z" fill="#222"/></svg>
<div class="a" style="left:987px;top:91px;width:10px;height:20px;background:#b5b5b5"></div>
<svg class="a" style="left:988px;top:617px" width="8" height="5"><path d="M0.5 0.5H7.5L4 4.5Z" fill="#222"/></svg>
<div class="a" style="left:55px;top:627px;width:930px;height:12px;background:#f1f1f1"></div>
<svg class="a" style="left:60px;top:629px" width="5" height="8"><path d="M4.5 0.5V7.5L0.5 4Z" fill="#222"/></svg>
<div class="a" style="left:69.5px;top:629px;width:59px;height:10px;background:#b5b5b5"></div>
<svg class="a" style="left:976px;top:630px" width="5" height="8"><path d="M0.5 0.5V7.5L4.5 4Z" fill="#222"/></svg>
<!-- ZOOM PILL -->
<div class="a" style="left:104px;top:596px;width:70px;height:26px;border-radius:13px;background:rgba(235,235,235,0.75)"></div>
<div class="t" style="left:106px;top:601px;font-size:15.5px;color:#a9a9a9">100%</div>
<svg class="a" style="left:152px;top:601px" width="16" height="16" fill="none" stroke="#a9a9a9" stroke-width="1.3"><circle cx="8" cy="8" r="7"/><path d="M8 4V12M4 8H12"/></svg>
<!-- LOGO -->
<svg class="a" style="left:0;top:530px" width="130" height="100">
  <ellipse cx="66" cy="53" rx="52" ry="40.5" fill="#cc3b1e"/>
  <g fill="#fff" font-family="Liberation Serif" font-style="italic">
    <text x="25" y="52" font-size="27px">Craft</text>
    <text x="33" y="76.5" font-size="28px">Sarah</text>
  </g>
  <text x="88" y="46" font-size="6.5px" fill="#fff" font-family="Liberation Serif" font-weight="bold">WITH</text>
  <path d="M86 50 Q97 47 109 49" stroke="#fff" stroke-width="1" fill="none"/>
  <path d="M70 64 Q85 52 100 56 Q104 60 98 62" stroke="#fff" stroke-width="0.9" fill="none"/>
</svg>

<!-- RIGHT PANEL -->
<div id="panel" class="a"><div class="a" style="left:0;top:0;width:202px;height:17px;background:#dcdcdc"></div>
<div class="t" style="left:37.0px;top:2.2px;font-size:9.4px;color:#444">Layers</div>
<div class="t" style="left:128.6px;top:2.2px;font-size:9.6px;color:#444">Color Sync</div>
<div class="a" style="left:0;top:16px;width:202px;height:1px;background:#c9c9c9"></div>
<div class="a" style="left:0;top:15.5px;width:102px;height:1.6px;background:#6a6a6a"></div>
<div class="a" style="left:0;top:17px;width:202px;height:40px;background:#d9d9d9;border-bottom:1px solid #c4c4c4"></div>
<div class="t" style="left:-7.4px;width:60px;text-align:center;top:42.5px;font-size:8.2px;color:#b0b0b0;letter-spacing:-0.1px">Group</div>
<div class="t" style="left:42.2px;width:60px;text-align:center;top:42.5px;font-size:8.2px;color:#b0b0b0;letter-spacing:-0.1px">Ungroup</div>
<div class="t" style="left:98.9px;width:60px;text-align:center;top:42.5px;font-size:8.6px;color:#2a2a2a;-webkit-text-stroke:0.25px #2a2a2a;letter-spacing:-0.1px">Duplicate</div>
<div class="t" style="left:150.1px;width:60px;text-align:center;top:42.5px;font-size:8.6px;color:#2a2a2a;-webkit-text-stroke:0.25px #2a2a2a;letter-spacing:-0.1px">Delete</div>
<svg class="a" style="left:0;top:0" width="202" height="60" fill="none" stroke-linecap="round" stroke-linejoin="round"><g transform="translate(15.100000000000023,23.799999999999997)" stroke="#b0b0b0" stroke-width="1.2"><path d="M0.5 3.5V0.5H3.5M11.5 0.5H14.5V3.5M14.5 11.5V14.5H11.5M3.5 14.5H0.5V11.5"/><rect x="3.5" y="3.5" width="5" height="5" rx="1"/><rect x="6.5" y="6.5" width="5" height="5" rx="1"/></g><g transform="translate(64.20000000000005,23.299999999999997)" stroke="#b0b0b0" stroke-width="1.1"><circle cx="3" cy="3" r="2"/><circle cx="13" cy="3" r="2"/><circle cx="3" cy="13" r="2"/><circle cx="13" cy="13" r="2"/><rect x="4.5" y="4.5" width="5" height="5" rx="1"/><rect x="7" y="7" width="4.5" height="4.5" rx="1"/></g><g transform="translate(121.40000000000009,23.799999999999997)" stroke="#222" stroke-width="1.3"><path d="M3.5 11.5H1.5V1H11.5V3"/><rect x="4" y="4" width="10.5" height="10.5" rx="0.5"/><path d="M9.25 6.5V12M6.5 9.25H12"/></g><g transform="translate(173.0999999999999,23.299999999999997)" stroke="#222" stroke-width="1.3"><path d="M0.5 3H13.5M4.5 3V1H9.5V3M2 3L3 15H11L12 3M5.5 6V12M8.5 6V12"/></g></svg>
<div class="a" style="left:0;top:58px;width:190px;height:467px;background:#f2f2f2"></div>
<div class="a" style="left:0px;top:57.3px;width:190px;height:58.6px;background:#d3d3d3"></div>
<svg class="a" style="left:8.5px;top:65.8px" width="9" height="6"><path d="M1 1L4.5 4.5L8 1" fill="none" stroke="#222" stroke-width="1.4"/></svg>
<div class="t" style="left:27.0px;top:63.4px;font-size:11.3px;color:#222;-webkit-text-stroke:0.2px #222">Flower Border</div>
<div class="t" style="left:53.5px;top:91.6px;font-size:10.3px;letter-spacing:-0.3px;color:#2a2a2a">Basic Cut</div>
<svg class="a" style="left:165.0px;top:63.8px" width="14" height="9" fill="none" stroke="#333" stroke-width="1.3"><path d="M1 4.5Q7 -1.8 13 4.5Q7 10.8 1 4.5Z"/><circle cx="7" cy="4.5" r="1.9"/></svg>
<svg class="a" style="left:-998px;top:-38px" width="1200" height="639"><g transform="translate(0,-0.2)"><path d="M1020.00,135.13 1020.15,135.35 1020.00,135.58 1020.12,135.86 1020.35,136.00 1021.05,135.78 1021.13,135.96 1020.59,136.41 1020.59,136.69 1020.78,136.93 1021.04,136.91 1021.17,137.15 1021.46,137.20 1021.71,137.06 1021.86,136.35 1022.06,136.37 1022.19,137.06 1022.43,137.19 1022.73,137.15 1022.86,136.91 1023.12,136.93 1023.30,136.69 1023.31,136.41 1022.77,135.96 1022.89,135.76 1023.55,136.00 1023.81,135.83 1024.10,135.84 1024.03,136.37 1024.16,136.81 1024.48,137.14 1024.98,137.31 1025.49,137.21 1025.89,136.89 1026.17,137.14 1026.47,137.28 1026.80,137.31 1027.12,137.24 1027.45,137.02 1027.67,136.69 1027.75,136.30 1027.67,135.84 1027.95,135.83 1028.22,136.00 1028.88,135.76 1028.99,135.96 1028.46,136.41 1028.46,136.69 1028.65,136.93 1028.92,136.92 1029.04,137.15 1029.33,137.20 1029.58,137.06 1029.73,136.35 1029.93,136.37 1030.05,137.06 1030.29,137.19 1030.59,137.15 1030.72,136.91 1030.98,136.93 1031.17,136.69 1031.17,136.41 1030.64,135.96 1030.75,135.76 1031.41,136.00 1031.68,135.83 1031.97,135.84 1031.89,136.30 1031.97,136.69 1032.19,137.02 1032.52,137.24 1032.84,137.31 1033.17,137.28 1033.47,137.14 1033.75,136.89 1034.21,137.24 1034.80,137.30 1035.21,137.11 1035.51,136.75 1035.61,136.30 1035.54,135.84 1035.82,135.83 1036.08,136.00 1036.74,135.76 1036.86,135.96 1036.32,136.41 1036.33,136.69 1036.51,136.93 1036.77,136.91 1036.90,137.15 1037.20,137.19 1037.44,137.06 1037.57,136.37 1037.77,136.35 1037.92,137.06 1038.17,137.20 1038.46,137.15 1038.59,136.91 1038.85,136.93 1039.03,136.69 1039.04,136.41 1038.50,135.96 1038.62,135.76 1039.28,136.00 1039.54,135.83 1039.84,135.84 1039.76,136.30 1039.83,136.69 1040.05,137.02 1040.38,137.24 1040.71,137.31 1041.04,137.28 1041.34,137.14 1041.62,136.89 1042.01,137.21 1042.46,137.32 1042.97,137.18 1043.34,136.81 1043.48,136.23 1043.28,135.68 1043.79,135.31 1043.95,135.02 1044.00,134.69 1043.90,134.24 1043.60,133.89 1043.18,133.70 1042.65,133.72 1042.55,133.31 1042.33,132.98 1041.94,132.74 1041.55,132.69 1041.17,132.79 1040.86,133.03 1040.68,133.31 1040.59,133.72 1040.12,133.69 1039.69,133.85 1039.37,134.19 1039.22,134.71 1038.62,134.94 1038.50,134.75 1039.04,134.29 1039.03,134.01 1038.85,133.78 1038.59,133.80 1038.46,133.55 1038.16,133.51 1037.92,133.65 1037.79,134.34 1037.60,134.36 1037.44,133.65 1037.20,133.51 1036.90,133.55 1036.79,133.79 1036.51,133.78 1036.32,134.02 1036.32,134.29 1036.86,134.75 1036.73,134.94 1036.15,134.71 1036.03,134.24 1035.74,133.89 1035.32,133.70 1034.79,133.72 1034.69,133.31 1034.47,132.98 1034.14,132.76 1033.75,132.68 1033.36,132.76 1033.03,132.98 1032.82,133.31 1032.72,133.72 1032.19,133.70 1031.77,133.89 1031.48,134.24 1031.36,134.71 1030.76,134.94 1030.64,134.75 1031.17,134.29 1031.17,134.01 1030.98,133.78 1030.72,133.80 1030.59,133.55 1030.29,133.51 1030.05,133.65 1029.93,134.34 1029.73,134.36 1029.58,133.65 1029.33,133.51 1029.03,133.55 1028.92,133.79 1028.65,133.78 1028.46,134.02 1028.46,134.29 1028.99,134.75 1028.87,134.94 1028.28,134.71 1028.16,134.24 1027.87,133.89 1027.45,133.70 1026.92,133.72 1026.82,133.31 1026.61,132.98 1026.28,132.76 1025.89,132.68 1025.50,132.76 1025.17,132.98 1024.95,133.31 1024.85,133.72 1024.32,133.70 1023.90,133.89 1023.61,134.24 1023.49,134.71 1022.89,134.94 1022.77,134.75 1023.31,134.29 1023.30,134.01 1023.12,133.78 1022.86,133.80 1022.73,133.55 1022.43,133.51 1022.19,133.65 1022.06,134.34 1021.87,134.36 1021.71,133.65 1021.47,133.51 1021.17,133.55 1021.05,133.79 1020.78,133.78 1020.59,134.02 1020.59,134.29 1021.13,134.75 1021.05,134.93 1020.35,134.71 1020.11,134.85ZM1038.03,135.45 1037.86,135.67 1037.58,135.71 1037.36,135.54 1037.32,135.26 1037.50,135.03 1037.78,135.00 1038.00,135.17ZM1030.17,135.45 1030.00,135.67 1029.72,135.71 1029.50,135.54 1029.46,135.26 1029.63,135.03 1029.91,135.00 1030.13,135.17ZM1022.30,135.45 1022.13,135.67 1021.85,135.71 1021.63,135.54 1021.59,135.26 1021.77,135.03 1022.05,135.00 1022.27,135.17ZM1026.57,133.59 1026.18,134.28 1025.86,134.42 1025.56,134.23 1025.22,133.65 1025.19,133.46 1025.30,133.24 1025.45,133.14 1026.26,133.13 1026.52,133.29ZM1034.44,133.59 1034.05,134.28 1033.72,134.42 1033.42,134.23 1033.08,133.65 1033.06,133.46 1033.16,133.24 1033.32,133.14 1034.13,133.13 1034.38,133.29ZM1024.63,134.01 1025.16,134.59 1025.19,134.94 1024.92,135.17 1024.26,135.31 1024.08,135.28 1023.90,135.11 1023.86,134.93 1024.09,134.16 1024.33,133.97ZM1027.57,135.31 1026.79,135.15 1026.56,134.89 1026.65,134.54 1027.10,134.04 1027.26,133.96 1027.45,133.97 1027.65,134.11 1027.91,134.87 1027.84,135.16ZM1032.49,134.01 1033.03,134.59 1033.06,134.94 1032.79,135.17 1032.13,135.31 1031.95,135.28 1031.77,135.11 1031.72,134.93 1031.96,134.16 1032.19,133.97ZM1026.19,135.08 1026.14,135.31 1025.95,135.44 1025.72,135.39 1025.59,135.20 1025.64,134.97 1025.83,134.84 1026.06,134.88ZM1024.42,135.99 1025.14,135.66 1025.49,135.74 1025.62,136.07 1025.55,136.74 1025.46,136.90 1025.25,137.02 1025.07,137.00 1024.40,136.54 1024.29,136.26ZM1026.27,136.85 1026.15,136.00 1026.34,135.70 1026.63,135.66 1027.40,136.03 1027.48,136.26 1027.41,136.50 1026.82,136.95 1026.52,137.02ZM1032.24,136.03 1033.01,135.66 1033.30,135.70 1033.49,136.00 1033.37,136.85 1033.18,137.00 1032.93,137.00 1032.32,136.58 1032.16,136.32ZM1042.30,133.59 1041.91,134.28 1041.59,134.42 1041.29,134.23 1040.95,133.65 1040.93,133.46 1041.03,133.24 1041.18,133.14 1041.99,133.13 1042.25,133.29ZM1035.44,135.31 1034.66,135.15 1034.43,134.89 1034.51,134.54 1034.96,134.04 1035.13,133.96 1035.37,133.99 1035.51,134.11 1035.78,134.87 1035.70,135.16ZM1040.36,134.01 1040.89,134.59 1040.92,134.94 1040.65,135.17 1039.99,135.31 1039.81,135.28 1039.67,135.16 1039.59,134.93 1039.82,134.16 1040.06,133.97ZM1043.30,135.31 1042.52,135.15 1042.29,134.89 1042.38,134.54 1042.83,134.04 1043.00,133.96 1043.18,133.97 1043.38,134.11 1043.64,134.87 1043.57,135.16ZM1034.05,135.08 1034.01,135.31 1033.81,135.44 1033.58,135.39 1033.45,135.20 1033.50,134.97 1033.69,134.84 1033.92,134.88ZM1041.92,135.08 1041.87,135.31 1041.68,135.44 1041.45,135.39 1041.32,135.20 1041.37,134.97 1041.56,134.84 1041.79,134.88ZM1034.11,136.79 1034.02,136.00 1034.20,135.70 1034.55,135.68 1035.17,135.95 1035.30,136.08 1035.34,136.32 1035.28,136.50 1034.63,136.98 1034.33,137.00ZM1040.11,136.03 1040.88,135.66 1041.17,135.70 1041.35,136.00 1041.23,136.85 1041.04,137.00 1040.80,137.00 1040.18,136.58 1040.03,136.32ZM1042.00,136.85 1041.88,136.00 1042.07,135.70 1042.36,135.66 1043.13,136.03 1043.21,136.26 1043.14,136.50 1042.55,136.95 1042.25,137.02Z" fill="#5f9a8b" fill-rule="evenodd" stroke="#3d6b5f" stroke-width="0.2"/></g></svg>
<div class="a" style="left:0px;top:115.9px;width:190px;height:58.6px;background:#f2f2f2"></div>
<div class="a" style="left:0px;top:115.4px;width:190px;height:1.2px;background:#cbcbcb"></div>
<div class="a" style="left:0px;top:116.6px;width:190px;height:1px;background:#fafafa"></div>
<svg class="a" style="left:8.5px;top:124.4px" width="9" height="6"><path d="M1 1L4.5 4.5L8 1" fill="none" stroke="#222" stroke-width="1.4"/></svg>
<div class="t" style="left:27.0px;top:122.0px;font-size:11.3px;color:#222;-webkit-text-stroke:0.2px #222">Weld Result</div>
<div class="t" style="left:53.5px;top:150.2px;font-size:10.3px;letter-spacing:-0.3px;color:#2a2a2a">Basic Cut</div>
<svg class="a" style="left:165.0px;top:122.4px" width="14" height="9" fill="none" stroke="#333" stroke-width="1.3"><path d="M1 4.5Q7 -1.8 13 4.5Q7 10.8 1 4.5Z"/><circle cx="7" cy="4.5" r="1.9"/></svg>
<svg class="a" style="left:-998px;top:-38px" width="1200" height="639"><path d="M1025.93,184.96 1025.60,185.36 1025.54,185.66 1025.59,185.89 1025.96,186.51 1026.46,187.12 1026.75,188.32 1027.19,188.92 1027.87,189.29 1028.08,189.34 1027.32,188.39 1027.06,186.93 1026.43,185.79 1026.86,185.69 1027.35,185.69 1028.36,185.91 1029.38,186.78 1029.60,186.85 1029.64,187.31 1029.66,188.01 1029.45,190.80 1029.43,193.48 1029.61,197.41 1029.75,198.47 1029.92,199.06 1029.45,198.97 1029.12,199.16 1028.91,199.00 1028.51,198.98 1028.13,199.21 1028.02,199.52 1027.74,199.51 1027.41,199.73 1027.24,200.15 1027.33,200.46 1027.07,200.66 1026.97,201.04 1027.07,201.42 1027.33,201.62 1027.24,201.88 1027.35,202.26 1027.69,202.55 1028.02,202.56 1028.13,202.87 1028.46,203.09 1028.85,203.11 1029.12,202.92 1029.39,203.11 1029.79,203.09 1030.11,202.87 1030.23,202.56 1030.55,202.55 1030.86,202.31 1031.00,201.94 1030.91,201.62 1031.17,201.42 1031.27,201.08 1031.91,201.66 1032.78,202.29 1034.44,203.15 1035.76,203.51 1036.40,203.47 1036.84,203.30 1037.16,203.01 1037.37,202.54 1037.31,202.08 1037.11,201.71 1036.67,201.36 1036.36,201.33 1035.84,201.43 1035.18,201.05 1034.21,200.11 1033.58,198.97 1033.44,198.35 1033.42,197.76 1033.59,194.71 1034.71,195.61 1035.95,197.87 1036.03,197.83 1036.48,196.39 1037.63,196.54 1037.28,195.41 1038.04,194.95 1037.96,194.53 1036.79,194.48 1036.68,193.91 1037.02,193.79 1037.49,193.22 1038.26,193.10 1037.83,191.95 1038.84,191.50 1038.53,191.38 1038.29,190.58 1039.42,190.12 1039.55,189.58 1038.86,188.96 1039.53,188.75 1039.49,188.67 1039.09,188.51 1039.48,188.12 1039.48,188.04 1038.73,187.80 1039.56,187.11 1038.43,186.43 1038.71,185.52 1038.61,185.50 1037.76,186.35 1036.65,187.11 1035.87,187.54 1035.64,187.22 1036.23,186.64 1037.38,186.00 1037.33,185.84 1036.36,185.67 1035.47,185.93 1035.16,184.99 1034.51,186.22 1033.81,185.91 1033.60,185.11 1032.92,185.96 1032.67,185.51 1032.58,185.51 1032.51,185.97 1032.03,185.22 1031.17,184.36 1029.90,183.61 1029.67,183.66 1029.10,182.72 1028.04,181.30 1028.11,181.66 1029.14,184.07 1029.43,185.59 1028.81,185.07 1027.72,184.68 1026.58,184.67ZM1032.66,186.32 1034.13,186.64 1034.75,187.11 1035.02,187.80 1034.96,188.51 1034.61,189.88 1033.70,192.04 1033.55,189.90 1033.02,187.46ZM1035.86,188.15 1036.12,187.82 1036.77,187.77 1037.78,188.06 1038.53,188.45 1038.20,188.64 1037.59,188.79 1035.59,189.09 1035.53,188.96ZM1034.83,190.35 1035.18,189.77 1035.39,189.64 1035.88,189.57 1036.32,189.67 1036.70,189.92 1037.17,190.41 1037.83,191.38 1037.77,191.48 1037.58,191.50 1035.53,191.16 1034.60,191.08ZM1033.66,193.35 1034.49,191.61 1034.79,191.42 1035.07,191.49 1035.30,191.83 1035.99,193.39 1036.19,193.90 1036.23,194.25 1036.05,194.40 1034.96,194.32 1033.64,194.34ZM1036.72,202.48 1036.42,202.74 1036.12,202.80 1036.49,202.44ZM1030.48,198.10 1030.24,195.46 1030.16,193.08 1030.18,190.80 1030.30,188.88 1030.65,189.96 1030.75,191.03 1030.86,198.10ZM1030.40,188.03 1030.18,185.73 1029.87,184.13 1031.00,185.16 1031.65,186.02 1031.99,186.89 1032.46,188.82 1032.72,190.29 1032.81,191.50 1032.70,196.04 1032.62,196.63 1032.68,198.10 1032.36,198.10 1032.33,197.78 1032.23,191.33 1032.06,190.26 1031.92,189.65 1031.78,189.59 1031.71,189.79 1031.71,192.31 1031.83,198.10 1031.65,198.10 1031.44,190.35 1031.08,189.03ZM1030.24,201.42 1030.01,201.83 1029.65,202.11 1029.20,202.23 1028.74,202.17 1028.34,201.93 1028.06,201.57 1027.94,201.12 1028.00,200.66 1028.23,200.26 1028.60,199.98 1029.04,199.86 1029.50,199.92 1029.90,200.15 1030.18,200.52 1030.30,200.97ZM1033.03,203.60 1032.79,203.35 1032.83,203.05 1032.70,202.80 1032.43,202.64 1032.19,202.68 1032.15,202.52 1031.97,202.35 1031.62,202.29 1031.30,202.49 1030.93,202.42 1030.66,202.57 1030.54,202.93 1030.30,203.03 1030.12,203.25 1030.09,203.56 1030.25,203.79 1030.10,203.98 1030.10,204.26 1030.26,204.53 1030.54,204.65 1030.59,204.91 1030.78,205.11 1031.05,205.18 1031.30,205.10 1031.55,205.27 1031.82,205.29 1032.10,205.14 1032.19,204.91 1032.47,204.94 1032.73,204.75 1032.83,204.49 1032.79,204.24 1032.95,204.13 1033.05,203.91ZM1032.26,204.04 1032.11,204.29 1031.88,204.47 1031.59,204.55 1031.30,204.51 1031.05,204.36 1030.87,204.13 1030.79,203.84 1030.83,203.55 1030.98,203.29 1031.21,203.12 1031.50,203.04 1031.79,203.08 1032.04,203.23 1032.22,203.46 1032.30,203.74Z" fill="#c3d9ea" fill-rule="evenodd" stroke="#9db3c4" stroke-width="0.25"/></svg>
<div class="a" style="left:0px;top:174.5px;width:190px;height:58.6px;background:#f2f2f2"></div>
<div class="a" style="left:0px;top:174.0px;width:190px;height:1.2px;background:#cbcbcb"></div>
<div class="a" style="left:0px;top:175.2px;width:190px;height:1px;background:#fafafa"></div>
<svg class="a" style="left:8.5px;top:183.0px" width="9" height="6"><path d="M1 1L4.5 4.5L8 1" fill="none" stroke="#222" stroke-width="1.4"/></svg>
<div class="t" style="left:27.0px;top:180.6px;font-size:11.3px;color:#222;-webkit-text-stroke:0.2px #222">Weld Result</div>
<div class="t" style="left:53.5px;top:208.8px;font-size:10.3px;letter-spacing:-0.3px;color:#2a2a2a">Basic Cut</div>
<svg class="a" style="left:165.0px;top:181.0px" width="14" height="9" fill="none" stroke="#333" stroke-width="1.3"><path d="M1 4.5Q7 -1.8 13 4.5Q7 10.8 1 4.5Z"/><circle cx="7" cy="4.5" r="1.9"/></svg>
<svg class="a" style="left:-998px;top:-38px" width="1200" height="639"><path d="M1039.14,243.44 1039.47,243.84 1039.53,244.14 1039.48,244.37 1039.12,244.99 1038.62,245.59 1038.33,246.79 1037.89,247.38 1037.21,247.76 1037.00,247.80 1037.76,246.86 1038.02,245.41 1038.65,244.27 1038.22,244.17 1037.73,244.17 1036.72,244.39 1035.71,245.26 1035.49,245.33 1035.45,245.79 1035.42,246.49 1035.64,249.26 1035.66,251.93 1035.47,255.84 1035.34,256.90 1035.17,257.48 1035.64,257.39 1035.96,257.59 1036.18,257.42 1036.57,257.41 1036.95,257.64 1037.06,257.95 1037.34,257.94 1037.66,258.16 1037.84,258.57 1037.74,258.88 1038.00,259.08 1038.11,259.46 1038.00,259.84 1037.74,260.04 1037.84,260.29 1037.73,260.67 1037.39,260.96 1037.06,260.97 1036.95,261.28 1036.63,261.50 1036.24,261.52 1035.96,261.33 1035.69,261.52 1035.30,261.50 1034.98,261.28 1034.87,260.97 1034.54,260.96 1034.23,260.72 1034.09,260.35 1034.19,260.04 1033.93,259.84 1033.82,259.49 1033.18,260.08 1032.32,260.70 1030.67,261.56 1029.35,261.92 1028.72,261.88 1028.28,261.71 1027.96,261.42 1027.75,260.95 1027.81,260.49 1028.01,260.13 1028.44,259.77 1028.75,259.75 1029.28,259.85 1029.93,259.46 1030.89,258.54 1031.53,257.40 1031.66,256.78 1031.68,256.20 1031.52,253.15 1030.40,254.05 1029.16,256.30 1029.08,256.26 1028.64,254.83 1027.49,254.98 1027.84,253.85 1027.09,253.39 1027.16,252.98 1028.32,252.93 1028.44,252.35 1028.10,252.24 1027.63,251.67 1026.87,251.55 1027.29,250.41 1026.29,249.96 1026.60,249.83 1026.83,249.04 1025.71,248.59 1025.58,248.04 1026.26,247.43 1025.60,247.22 1025.63,247.14 1026.03,246.98 1025.65,246.59 1025.65,246.51 1026.40,246.27 1025.57,245.58 1026.69,244.91 1026.41,244.00 1026.51,243.99 1027.36,244.83 1028.47,245.59 1029.24,246.02 1029.47,245.69 1028.88,245.12 1027.74,244.48 1027.79,244.32 1028.75,244.15 1029.64,244.41 1029.95,243.47 1030.60,244.70 1031.29,244.39 1031.51,243.60 1032.18,244.44 1032.43,243.99 1032.52,243.99 1032.59,244.45 1033.07,243.71 1033.93,242.85 1035.18,242.10 1035.41,242.15 1035.99,241.21 1037.04,239.80 1036.98,240.16 1035.95,242.56 1035.66,244.07 1036.28,243.55 1037.36,243.17 1038.50,243.15ZM1032.44,244.80 1030.98,245.12 1030.36,245.59 1030.09,246.27 1030.15,246.98 1030.50,248.35 1031.40,250.50 1031.55,248.36 1032.09,245.94ZM1029.26,246.62 1028.99,246.29 1028.35,246.24 1027.34,246.53 1026.60,246.92 1026.92,247.11 1027.53,247.26 1029.53,247.56 1029.58,247.43ZM1030.28,248.81 1029.93,248.24 1029.72,248.11 1029.24,248.04 1028.80,248.13 1028.41,248.38 1027.95,248.87 1027.29,249.83 1027.35,249.94 1027.54,249.96 1029.58,249.61 1030.51,249.54ZM1031.45,251.80 1030.61,250.06 1030.32,249.88 1030.04,249.95 1029.82,250.29 1029.13,251.84 1028.93,252.34 1028.89,252.70 1029.06,252.84 1030.15,252.76 1031.46,252.79ZM1028.40,260.89 1028.70,261.15 1029.00,261.21 1028.63,260.85ZM1034.61,256.53 1034.85,253.90 1034.93,251.53 1034.91,249.26 1034.79,247.35 1034.45,248.43 1034.35,249.49 1034.23,256.53ZM1034.69,246.50 1034.91,244.21 1035.22,242.61 1034.09,243.64 1033.45,244.50 1033.11,245.36 1032.64,247.29 1032.38,248.75 1032.29,249.96 1032.40,254.48 1032.48,255.07 1032.42,256.53 1032.74,256.53 1032.77,256.21 1032.87,249.79 1033.03,248.72 1033.18,248.11 1033.32,248.05 1033.39,248.26 1033.38,250.76 1033.27,256.53 1033.45,256.53 1033.65,248.81 1034.01,247.50ZM1034.85,259.84 1035.08,260.24 1035.44,260.52 1035.89,260.64 1036.34,260.58 1036.74,260.35 1037.02,259.98 1037.14,259.54 1037.08,259.08 1036.85,258.68 1036.49,258.40 1036.04,258.28 1035.59,258.34 1035.19,258.57 1034.91,258.94 1034.79,259.38ZM1032.07,262.00 1032.31,261.76 1032.28,261.46 1032.40,261.22 1032.67,261.05 1032.91,261.09 1032.94,260.93 1033.13,260.76 1033.47,260.71 1033.79,260.90 1034.16,260.83 1034.43,260.99 1034.55,261.34 1034.79,261.44 1034.96,261.66 1035.00,261.97 1034.84,262.20 1034.99,262.39 1034.99,262.67 1034.83,262.94 1034.55,263.06 1034.50,263.32 1034.31,263.51 1034.04,263.58 1033.79,263.50 1033.55,263.67 1033.27,263.69 1033.00,263.54 1032.91,263.31 1032.63,263.34 1032.37,263.15 1032.27,262.90 1032.31,262.64 1032.15,262.53 1032.05,262.32ZM1032.84,262.44 1032.98,262.70 1033.22,262.87 1033.50,262.95 1033.79,262.91 1034.05,262.77 1034.23,262.53 1034.30,262.25 1034.26,261.96 1034.12,261.70 1033.88,261.52 1033.60,261.45 1033.31,261.49 1033.05,261.63 1032.88,261.87 1032.80,262.15Z" fill="#c3d9ea" fill-rule="evenodd" stroke="#9db3c4" stroke-width="0.25"/></svg>
<div class="a" style="left:0px;top:233.1px;width:190px;height:58.6px;background:#f2f2f2"></div>
<div class="a" style="left:0px;top:232.6px;width:190px;height:1.2px;background:#cbcbcb"></div>
<div class="a" style="left:0px;top:233.8px;width:190px;height:1px;background:#fafafa"></div>
<svg class="a" style="left:8.5px;top:241.6px" width="9" height="6"><path d="M1 1L4.5 4.5L8 1" fill="none" stroke="#222" stroke-width="1.4"/></svg>
<div class="t" style="left:27.0px;top:239.2px;font-size:11.3px;color:#222;-webkit-text-stroke:0.2px #222">Flower Border</div>
<div class="t" style="left:53.5px;top:267.4px;font-size:10.3px;letter-spacing:-0.3px;color:#2a2a2a">Basic Cut</div>
<svg class="a" style="left:165.0px;top:239.6px" width="14" height="9" fill="none" stroke="#333" stroke-width="1.3"><path d="M1 4.5Q7 -1.8 13 4.5Q7 10.8 1 4.5Z"/><circle cx="7" cy="4.5" r="1.9"/></svg>
<svg class="a" style="left:-998px;top:-38px" width="1200" height="639"><path d="M1019.52,310.13 1020.04,310.73 1020.88,311.18 1020.52,312.07 1020.48,312.71 1020.58,312.97 1020.81,313.10 1021.46,313.18 1022.40,312.98 1022.69,313.89 1023.08,314.41 1023.31,314.54 1023.58,314.50 1024.12,314.14 1024.71,313.38 1025.52,313.90 1026.15,314.04 1026.42,314.00 1026.60,313.79 1026.78,313.17 1026.74,312.21 1027.53,312.13 1028.28,311.79 1028.47,311.45 1028.31,310.94 1028.86,311.18 1028.50,312.07 1028.46,312.71 1028.55,312.97 1028.79,313.10 1029.43,313.18 1030.37,312.98 1030.66,313.89 1031.17,314.50 1031.55,314.50 1031.97,314.25 1032.35,313.89 1032.68,313.38 1033.50,313.89 1034.27,314.04 1034.57,313.79 1034.72,313.33 1034.79,312.82 1034.72,312.21 1035.51,312.13 1036.25,311.79 1036.44,311.45 1036.25,310.86 1036.92,311.18 1036.55,312.07 1036.52,312.71 1036.61,312.97 1036.84,313.10 1037.49,313.18 1038.43,312.98 1038.57,313.57 1038.81,314.03 1039.11,314.41 1039.47,314.54 1040.15,314.14 1040.74,313.38 1041.23,313.75 1041.71,313.95 1042.19,314.04 1042.55,313.91 1042.81,313.17 1042.78,312.21 1043.73,312.08 1044.31,311.79 1044.48,311.58 1044.48,311.31 1044.23,310.71 1043.58,310.00 1044.23,309.29 1044.50,308.55 1044.31,308.21 1043.88,307.98 1043.39,307.83 1042.78,307.79 1042.81,306.83 1042.63,306.21 1042.45,306.00 1042.19,305.96 1041.56,306.10 1040.74,306.62 1040.15,305.86 1039.61,305.50 1039.34,305.46 1039.11,305.59 1038.72,306.11 1038.43,307.02 1037.49,306.82 1036.84,306.90 1036.61,307.03 1036.52,307.29 1036.55,307.93 1036.92,308.82 1036.25,309.14 1036.44,308.55 1036.25,308.21 1035.51,307.87 1034.72,307.78 1034.76,306.83 1034.57,306.21 1034.39,306.00 1034.13,305.96 1033.50,306.10 1032.68,306.62 1032.09,305.86 1031.55,305.50 1031.29,305.46 1031.05,305.59 1030.66,306.11 1030.37,307.02 1029.43,306.82 1028.79,306.90 1028.55,307.03 1028.46,307.29 1028.50,307.93 1028.86,308.82 1028.31,309.06 1028.47,308.55 1028.28,308.21 1027.53,307.87 1026.74,307.79 1026.78,306.83 1026.60,306.21 1026.42,306.00 1026.15,305.96 1025.52,306.10 1024.71,306.62 1024.12,305.86 1023.58,305.50 1023.31,305.46 1023.08,305.59 1022.69,306.11 1022.40,307.02 1021.46,306.82 1020.81,306.90 1020.58,307.03 1020.48,307.29 1020.52,307.93 1020.88,308.82 1020.32,309.07 1019.91,309.38 1019.59,309.75ZM1035.54,310.03 1035.52,310.00 1035.54,309.97ZM1024.06,307.88 1023.76,308.01 1023.44,307.99 1023.16,307.82 1022.99,307.49 1022.91,307.07 1022.95,306.61 1023.19,306.18 1023.41,306.02 1023.81,306.19 1024.19,306.68 1024.31,307.39 1024.21,307.72ZM1032.12,307.81 1031.84,307.99 1031.52,308.01 1031.21,307.90 1031.01,307.61 1030.88,307.07 1030.92,306.61 1031.17,306.18 1031.39,306.02 1031.79,306.19 1032.17,306.68 1032.28,307.39ZM1025.55,308.34 1025.22,308.30 1024.96,308.12 1024.80,307.83 1024.82,307.48 1025.08,306.98 1025.40,306.65 1025.86,306.48 1026.13,306.50 1026.33,306.89 1026.31,307.51 1025.94,308.12ZM1022.71,308.41 1022.57,308.70 1022.30,308.90 1021.98,308.94 1021.64,308.80 1021.30,308.53 1021.04,308.15 1020.95,307.67 1021.02,307.41 1021.43,307.27 1022.04,307.40 1022.58,307.87 1022.73,308.19ZM1030.71,308.30 1030.60,308.62 1030.38,308.84 1030.07,308.95 1029.73,308.86 1029.28,308.53 1029.01,308.15 1028.93,307.67 1029.00,307.41 1029.41,307.27 1030.02,307.40 1030.56,307.87ZM1026.28,309.65 1026.05,309.40 1025.97,309.10 1026.03,308.77 1026.28,308.52 1026.79,308.30 1027.25,308.26 1027.71,308.43 1027.91,308.62 1027.81,309.04 1027.40,309.50 1026.72,309.74ZM1022.02,309.68 1022.09,310.00 1022.02,310.32 1021.80,310.56 1021.44,310.67 1021.02,310.68 1020.57,310.56 1020.19,310.25 1020.08,310.00 1020.31,309.63 1020.86,309.34 1021.57,309.35 1021.89,309.51ZM1029.94,309.59 1030.06,309.90 1030.03,310.21 1029.86,310.49 1029.55,310.65 1028.99,310.68 1028.55,310.56 1028.17,310.25 1028.05,310.00 1028.28,309.63 1028.83,309.34 1029.55,309.35ZM1025.99,311.13 1025.98,310.79 1026.12,310.50 1026.37,310.30 1026.72,310.26 1027.26,310.42 1027.63,310.69 1027.88,311.11 1027.91,311.38 1027.56,311.65 1026.95,311.73 1026.28,311.48ZM1022.20,311.07 1022.49,311.22 1022.68,311.48 1022.73,311.81 1022.58,312.13 1022.18,312.51 1021.76,312.71 1021.27,312.71 1021.02,312.59 1020.96,312.16 1021.20,311.59 1021.75,311.14ZM1030.17,311.07 1030.47,311.22 1030.65,311.48 1030.70,311.81 1030.56,312.13 1030.15,312.51 1029.73,312.71 1029.24,312.71 1029.00,312.59 1028.94,312.16 1029.17,311.59 1029.73,311.14ZM1024.83,312.07 1025.04,311.81 1025.32,311.67 1025.65,311.68 1025.94,311.88 1026.25,312.34 1026.37,312.79 1026.29,313.27 1026.13,313.50 1025.70,313.48 1025.17,313.15 1024.82,312.52ZM1023.33,312.05 1023.66,311.98 1023.97,312.06 1024.21,312.28 1024.31,312.61 1024.24,313.17 1024.05,313.59 1023.67,313.90 1023.41,313.98 1023.09,313.68 1022.90,313.09 1023.04,312.39ZM1031.41,312.01 1031.74,311.99 1032.04,312.12 1032.23,312.37 1032.28,312.75 1032.22,313.17 1032.02,313.59 1031.65,313.90 1031.39,313.98 1031.07,313.68 1030.88,313.09 1031.01,312.39 1031.21,312.10ZM1040.18,307.81 1039.89,307.99 1039.58,308.01 1039.27,307.90 1039.07,307.61 1038.94,307.07 1038.98,306.61 1039.22,306.18 1039.44,306.02 1039.85,306.19 1040.23,306.68 1040.34,307.39ZM1033.52,308.34 1033.19,308.30 1032.93,308.12 1032.77,307.83 1032.80,307.48 1033.05,306.98 1033.37,306.65 1033.84,306.48 1034.11,306.50 1034.31,306.89 1034.28,307.51 1033.92,308.12ZM1041.58,308.34 1041.25,308.30 1040.99,308.12 1040.83,307.83 1040.86,307.48 1041.11,306.98 1041.43,306.65 1041.89,306.48 1042.16,306.50 1042.37,306.89 1042.34,307.51 1041.97,308.12ZM1038.76,308.30 1038.66,308.62 1038.44,308.84 1038.12,308.95 1037.78,308.86 1037.34,308.53 1037.07,308.15 1036.98,307.67 1037.05,307.41 1037.47,307.27 1038.07,307.40 1038.61,307.87ZM1034.25,309.65 1034.03,309.40 1033.94,309.10 1034.01,308.77 1034.25,308.52 1034.77,308.30 1035.23,308.26 1035.69,308.43 1035.88,308.62 1035.79,309.04 1035.37,309.50 1034.70,309.74ZM1042.31,309.65 1042.09,309.40 1042.00,309.10 1042.07,308.77 1042.31,308.52 1042.82,308.30 1043.28,308.26 1043.75,308.43 1043.94,308.62 1043.85,309.04 1043.43,309.50 1042.75,309.74ZM1038.05,309.68 1038.13,310.00 1038.05,310.32 1037.83,310.56 1037.48,310.67 1037.05,310.68 1036.60,310.56 1036.22,310.25 1036.11,310.00 1036.34,309.63 1036.89,309.34 1037.60,309.35 1037.92,309.51ZM1033.97,311.13 1033.96,310.79 1034.09,310.50 1034.35,310.30 1034.70,310.26 1035.23,310.42 1035.61,310.69 1035.86,311.11 1035.88,311.38 1035.54,311.65 1034.92,311.73 1034.25,311.48ZM1042.03,311.13 1042.01,310.79 1042.15,310.50 1042.40,310.30 1042.75,310.26 1043.29,310.42 1043.67,310.69 1043.91,311.11 1043.94,311.38 1043.59,311.65 1042.98,311.73 1042.31,311.48ZM1038.23,311.07 1038.53,311.22 1038.71,311.48 1038.76,311.81 1038.61,312.13 1038.21,312.51 1037.79,312.71 1037.30,312.71 1037.05,312.59 1036.99,312.16 1037.23,311.59 1037.78,311.14ZM1032.80,312.07 1033.01,311.81 1033.30,311.67 1033.63,311.68 1033.92,311.88 1034.22,312.34 1034.34,312.79 1034.26,313.27 1034.11,313.50 1033.67,313.48 1033.15,313.15 1032.80,312.52ZM1040.86,312.07 1041.07,311.81 1041.36,311.67 1041.68,311.68 1041.97,311.88 1042.28,312.34 1042.40,312.79 1042.32,313.27 1042.16,313.50 1041.73,313.48 1041.20,313.15 1040.86,312.52ZM1039.36,312.05 1039.69,311.98 1040.00,312.06 1040.25,312.28 1040.34,312.61 1040.27,313.17 1040.08,313.59 1039.71,313.90 1039.44,313.98 1039.12,313.68 1038.93,313.09 1039.07,312.39Z" fill="#8e5369" fill-rule="evenodd" stroke="#5a2c3d" stroke-width="0.2"/></svg>
<div class="a" style="left:0px;top:291.7px;width:190px;height:58.6px;background:#f2f2f2"></div>
<div class="a" style="left:0px;top:291.2px;width:190px;height:1.2px;background:#cbcbcb"></div>
<div class="a" style="left:0px;top:292.4px;width:190px;height:1px;background:#fafafa"></div>
<svg class="a" style="left:8.5px;top:300.2px" width="9" height="6"><path d="M1 1L4.5 4.5L8 1" fill="none" stroke="#222" stroke-width="1.4"/></svg>
<div class="t" style="left:27.0px;top:297.8px;font-size:11.3px;color:#222;-webkit-text-stroke:0.2px #222">Flower Border</div>
<div class="t" style="left:53.5px;top:326.0px;font-size:10.3px;letter-spacing:-0.3px;color:#2a2a2a">Basic Cut</div>
<svg class="a" style="left:165.0px;top:298.2px" width="14" height="9" fill="none" stroke="#333" stroke-width="1.3"><path d="M1 4.5Q7 -1.8 13 4.5Q7 10.8 1 4.5Z"/><circle cx="7" cy="4.5" r="1.9"/></svg>
<svg class="a" style="left:-998px;top:-38px" width="1200" height="639"><g transform="translate(0,234.2)"><path d="M1020.00,135.13 1020.15,135.35 1020.00,135.58 1020.12,135.86 1020.35,136.00 1021.05,135.78 1021.13,135.96 1020.59,136.41 1020.59,136.69 1020.78,136.93 1021.04,136.91 1021.17,137.15 1021.46,137.20 1021.71,137.06 1021.86,136.35 1022.06,136.37 1022.19,137.06 1022.43,137.19 1022.73,137.15 1022.86,136.91 1023.12,136.93 1023.30,136.69 1023.31,136.41 1022.77,135.96 1022.89,135.76 1023.55,136.00 1023.81,135.83 1024.10,135.84 1024.03,136.37 1024.16,136.81 1024.48,137.14 1024.98,137.31 1025.49,137.21 1025.89,136.89 1026.17,137.14 1026.47,137.28 1026.80,137.31 1027.12,137.24 1027.45,137.02 1027.67,136.69 1027.75,136.30 1027.67,135.84 1027.95,135.83 1028.22,136.00 1028.88,135.76 1028.99,135.96 1028.46,136.41 1028.46,136.69 1028.65,136.93 1028.92,136.92 1029.04,137.15 1029.33,137.20 1029.58,137.06 1029.73,136.35 1029.93,136.37 1030.05,137.06 1030.29,137.19 1030.59,137.15 1030.72,136.91 1030.98,136.93 1031.17,136.69 1031.17,136.41 1030.64,135.96 1030.75,135.76 1031.41,136.00 1031.68,135.83 1031.97,135.84 1031.89,136.30 1031.97,136.69 1032.19,137.02 1032.52,137.24 1032.84,137.31 1033.17,137.28 1033.47,137.14 1033.75,136.89 1034.21,137.24 1034.80,137.30 1035.21,137.11 1035.51,136.75 1035.61,136.30 1035.54,135.84 1035.82,135.83 1036.08,136.00 1036.74,135.76 1036.86,135.96 1036.32,136.41 1036.33,136.69 1036.51,136.93 1036.77,136.91 1036.90,137.15 1037.20,137.19 1037.44,137.06 1037.57,136.37 1037.77,136.35 1037.92,137.06 1038.17,137.20 1038.46,137.15 1038.59,136.91 1038.85,136.93 1039.03,136.69 1039.04,136.41 1038.50,135.96 1038.62,135.76 1039.28,136.00 1039.54,135.83 1039.84,135.84 1039.76,136.30 1039.83,136.69 1040.05,137.02 1040.38,137.24 1040.71,137.31 1041.04,137.28 1041.34,137.14 1041.62,136.89 1042.01,137.21 1042.46,137.32 1042.97,137.18 1043.34,136.81 1043.48,136.23 1043.28,135.68 1043.79,135.31 1043.95,135.02 1044.00,134.69 1043.90,134.24 1043.60,133.89 1043.18,133.70 1042.65,133.72 1042.55,133.31 1042.33,132.98 1041.94,132.74 1041.55,132.69 1041.17,132.79 1040.86,133.03 1040.68,133.31 1040.59,133.72 1040.12,133.69 1039.69,133.85 1039.37,134.19 1039.22,134.71 1038.62,134.94 1038.50,134.75 1039.04,134.29 1039.03,134.01 1038.85,133.78 1038.59,133.80 1038.46,133.55 1038.16,133.51 1037.92,133.65 1037.79,134.34 1037.60,134.36 1037.44,133.65 1037.20,133.51 1036.90,133.55 1036.79,133.79 1036.51,133.78 1036.32,134.02 1036.32,134.29 1036.86,134.75 1036.73,134.94 1036.15,134.71 1036.03,134.24 1035.74,133.89 1035.32,133.70 1034.79,133.72 1034.69,133.31 1034.47,132.98 1034.14,132.76 1033.75,132.68 1033.36,132.76 1033.03,132.98 1032.82,133.31 1032.72,133.72 1032.19,133.70 1031.77,133.89 1031.48,134.24 1031.36,134.71 1030.76,134.94 1030.64,134.75 1031.17,134.29 1031.17,134.01 1030.98,133.78 1030.72,133.80 1030.59,133.55 1030.29,133.51 1030.05,133.65 1029.93,134.34 1029.73,134.36 1029.58,133.65 1029.33,133.51 1029.03,133.55 1028.92,133.79 1028.65,133.78 1028.46,134.02 1028.46,134.29 1028.99,134.75 1028.87,134.94 1028.28,134.71 1028.16,134.24 1027.87,133.89 1027.45,133.70 1026.92,133.72 1026.82,133.31 1026.61,132.98 1026.28,132.76 1025.89,132.68 1025.50,132.76 1025.17,132.98 1024.95,133.31 1024.85,133.72 1024.32,133.70 1023.90,133.89 1023.61,134.24 1023.49,134.71 1022.89,134.94 1022.77,134.75 1023.31,134.29 1023.30,134.01 1023.12,133.78 1022.86,133.80 1022.73,133.55 1022.43,133.51 1022.19,133.65 1022.06,134.34 1021.87,134.36 1021.71,133.65 1021.47,133.51 1021.17,133.55 1021.05,133.79 1020.78,133.78 1020.59,134.02 1020.59,134.29 1021.13,134.75 1021.05,134.93 1020.35,134.71 1020.11,134.85ZM1038.03,135.45 1037.86,135.67 1037.58,135.71 1037.36,135.54 1037.32,135.26 1037.50,135.03 1037.78,135.00 1038.00,135.17ZM1030.17,135.45 1030.00,135.67 1029.72,135.71 1029.50,135.54 1029.46,135.26 1029.63,135.03 1029.91,135.00 1030.13,135.17ZM1022.30,135.45 1022.13,135.67 1021.85,135.71 1021.63,135.54 1021.59,135.26 1021.77,135.03 1022.05,135.00 1022.27,135.17ZM1026.57,133.59 1026.18,134.28 1025.86,134.42 1025.56,134.23 1025.22,133.65 1025.19,133.46 1025.30,133.24 1025.45,133.14 1026.26,133.13 1026.52,133.29ZM1034.44,133.59 1034.05,134.28 1033.72,134.42 1033.42,134.23 1033.08,133.65 1033.06,133.46 1033.16,133.24 1033.32,133.14 1034.13,133.13 1034.38,133.29ZM1024.63,134.01 1025.16,134.59 1025.19,134.94 1024.92,135.17 1024.26,135.31 1024.08,135.28 1023.90,135.11 1023.86,134.93 1024.09,134.16 1024.33,133.97ZM1027.57,135.31 1026.79,135.15 1026.56,134.89 1026.65,134.54 1027.10,134.04 1027.26,133.96 1027.45,133.97 1027.65,134.11 1027.91,134.87 1027.84,135.16ZM1032.49,134.01 1033.03,134.59 1033.06,134.94 1032.79,135.17 1032.13,135.31 1031.95,135.28 1031.77,135.11 1031.72,134.93 1031.96,134.16 1032.19,133.97ZM1026.19,135.08 1026.14,135.31 1025.95,135.44 1025.72,135.39 1025.59,135.20 1025.64,134.97 1025.83,134.84 1026.06,134.88ZM1024.42,135.99 1025.14,135.66 1025.49,135.74 1025.62,136.07 1025.55,136.74 1025.46,136.90 1025.25,137.02 1025.07,137.00 1024.40,136.54 1024.29,136.26ZM1026.27,136.85 1026.15,136.00 1026.34,135.70 1026.63,135.66 1027.40,136.03 1027.48,136.26 1027.41,136.50 1026.82,136.95 1026.52,137.02ZM1032.24,136.03 1033.01,135.66 1033.30,135.70 1033.49,136.00 1033.37,136.85 1033.18,137.00 1032.93,137.00 1032.32,136.58 1032.16,136.32ZM1042.30,133.59 1041.91,134.28 1041.59,134.42 1041.29,134.23 1040.95,133.65 1040.93,133.46 1041.03,133.24 1041.18,133.14 1041.99,133.13 1042.25,133.29ZM1035.44,135.31 1034.66,135.15 1034.43,134.89 1034.51,134.54 1034.96,134.04 1035.13,133.96 1035.37,133.99 1035.51,134.11 1035.78,134.87 1035.70,135.16ZM1040.36,134.01 1040.89,134.59 1040.92,134.94 1040.65,135.17 1039.99,135.31 1039.81,135.28 1039.67,135.16 1039.59,134.93 1039.82,134.16 1040.06,133.97ZM1043.30,135.31 1042.52,135.15 1042.29,134.89 1042.38,134.54 1042.83,134.04 1043.00,133.96 1043.18,133.97 1043.38,134.11 1043.64,134.87 1043.57,135.16ZM1034.05,135.08 1034.01,135.31 1033.81,135.44 1033.58,135.39 1033.45,135.20 1033.50,134.97 1033.69,134.84 1033.92,134.88ZM1041.92,135.08 1041.87,135.31 1041.68,135.44 1041.45,135.39 1041.32,135.20 1041.37,134.97 1041.56,134.84 1041.79,134.88ZM1034.11,136.79 1034.02,136.00 1034.20,135.70 1034.55,135.68 1035.17,135.95 1035.30,136.08 1035.34,136.32 1035.28,136.50 1034.63,136.98 1034.33,137.00ZM1040.11,136.03 1040.88,135.66 1041.17,135.70 1041.35,136.00 1041.23,136.85 1041.04,137.00 1040.80,137.00 1040.18,136.58 1040.03,136.32ZM1042.00,136.85 1041.88,136.00 1042.07,135.70 1042.36,135.66 1043.13,136.03 1043.21,136.26 1043.14,136.50 1042.55,136.95 1042.25,137.02Z" fill="#5f9a8b" fill-rule="evenodd" stroke="#3d6b5f" stroke-width="0.2"/></g></svg>
<div class="a" style="left:0px;top:350.3px;width:190px;height:58.6px;background:#f2f2f2"></div>
<div class="a" style="left:0px;top:349.8px;width:190px;height:1.2px;background:#cbcbcb"></div>
<div class="a" style="left:0px;top:351.0px;width:190px;height:1px;background:#fafafa"></div>
<svg class="a" style="left:8.5px;top:358.8px" width="9" height="6"><path d="M1 1L4.5 4.5L8 1" fill="none" stroke="#222" stroke-width="1.4"/></svg>
<div class="t" style="left:27.0px;top:356.4px;font-size:11.3px;color:#222;-webkit-text-stroke:0.2px #222">Folk Art Flower</div>
<div class="t" style="left:53.5px;top:384.6px;font-size:10.3px;letter-spacing:-0.3px;color:#2a2a2a">Basic Cut</div>
<svg class="a" style="left:165.0px;top:356.8px" width="14" height="9" fill="none" stroke="#333" stroke-width="1.3"><path d="M1 4.5Q7 -1.8 13 4.5Q7 10.8 1 4.5Z"/><circle cx="7" cy="4.5" r="1.9"/></svg>
<svg class="a" style="left:-998px;top:-38px" width="1200" height="639"><path d="M1032.00,420.47 1030.96,421.45 1030.77,421.77 1030.70,422.10 1030.78,422.47 1031.03,422.95 1032.00,423.79 1032.97,422.95 1033.22,422.47 1033.29,421.99 1033.11,421.55 1032.70,421.05ZM1027.35,422.14 1027.41,425.95 1027.64,427.60 1027.87,428.45 1028.20,429.17 1028.62,429.79 1029.00,430.15 1029.82,430.64 1030.52,430.94 1031.27,431.15 1032.00,431.24 1032.73,431.15 1033.84,430.79 1034.77,430.32 1035.38,429.79 1035.80,429.17 1036.13,428.45 1036.47,427.01 1036.59,425.95 1036.65,422.14 1035.62,422.28 1035.23,422.44 1034.86,422.70 1033.49,424.09 1032.00,425.88 1030.29,423.85 1028.96,422.55 1028.38,422.28ZM1030.17,432.31 1028.40,433.60 1027.64,433.89 1027.17,433.93 1026.03,433.79 1024.57,433.41 1023.73,433.05 1022.61,432.31 1022.00,431.76 1021.54,431.15 1021.20,430.50 1020.90,429.48 1020.85,428.75 1020.97,427.71 1021.18,427.08 1021.48,426.50 1022.01,425.89 1022.66,425.64 1023.48,425.65 1024.13,426.00 1024.29,426.29 1024.35,426.62 1024.26,427.08 1023.92,427.29 1023.21,427.32 1022.97,427.41 1022.59,427.78 1022.50,428.18 1022.63,428.79 1022.95,429.08 1023.44,429.24 1024.14,429.23 1024.65,429.13 1025.29,428.87 1025.66,428.60 1025.96,428.25 1026.37,427.23 1026.41,426.63 1026.29,425.96 1025.88,424.92 1025.47,424.44 1024.93,424.12 1023.98,423.89 1022.90,423.96 1022.16,424.17 1021.18,424.74 1020.59,425.29 1020.12,426.00 1019.76,426.94 1019.54,428.04 1019.53,429.19 1019.80,430.41 1020.29,431.67 1020.97,432.75 1021.39,433.18 1021.88,433.57 1022.98,434.21 1024.72,434.84 1025.99,435.01 1028.18,435.01 1028.98,434.86 1029.91,434.54 1030.35,434.31 1030.76,433.89 1031.06,433.20 1031.08,432.70 1030.98,432.47 1030.68,432.19ZM1033.32,432.19 1032.95,432.58 1032.92,433.02 1033.06,433.57 1033.36,434.03 1033.65,434.31 1034.09,434.54 1035.40,434.95 1036.80,435.05 1038.65,434.95 1039.87,434.68 1041.58,433.91 1042.61,433.18 1043.39,432.24 1043.98,431.04 1044.36,429.78 1044.50,428.62 1044.37,427.48 1044.07,426.44 1043.67,425.62 1043.13,425.00 1042.18,424.33 1041.47,424.05 1040.72,423.90 1040.02,423.89 1039.07,424.12 1038.31,424.66 1037.95,425.24 1037.71,425.96 1037.59,426.63 1037.70,427.52 1038.18,428.44 1038.91,428.97 1039.60,429.19 1040.56,429.24 1041.05,429.08 1041.43,428.66 1041.49,428.03 1041.24,427.57 1040.79,427.32 1040.08,427.29 1039.69,427.00 1039.65,426.62 1039.77,426.13 1039.99,425.90 1040.33,425.72 1040.72,425.61 1041.12,425.61 1041.56,425.70 1041.99,425.89 1042.52,426.50 1042.94,427.40 1043.13,428.39 1043.14,429.12 1043.03,429.82 1042.80,430.50 1042.46,431.15 1042.00,431.76 1041.39,432.31 1040.66,432.82 1039.87,433.24 1038.95,433.56 1037.52,433.86 1036.58,433.92 1036.17,433.83 1035.41,433.50 1033.83,432.31ZM1029.25,432.02 1028.23,431.82 1026.42,431.01 1025.70,430.85 1025.24,430.89 1024.99,431.01 1024.70,431.32 1024.63,431.58 1024.75,432.24 1025.09,432.63 1025.82,432.99 1026.52,433.10 1027.42,433.09 1028.13,432.90 1028.66,432.56ZM1034.75,432.02 1035.70,432.82 1036.22,433.02 1037.00,433.12 1037.96,433.04 1038.75,432.74 1039.16,432.39 1039.35,431.91 1039.34,431.44 1039.12,431.10 1038.76,430.89 1037.95,430.91 1037.39,431.08 1035.61,431.87ZM1032.88,434.46 1032.75,434.13 1032.50,433.89 1032.18,433.75 1031.82,433.75 1031.50,433.89 1031.25,434.13 1031.12,434.46 1031.12,434.81 1031.25,435.13 1031.50,435.38 1031.82,435.52 1032.18,435.52 1032.50,435.38 1032.75,435.13 1032.88,434.81Z" fill="#e77465" fill-rule="evenodd" stroke="#a8544a" stroke-width="0.2"/></svg>
<div class="a" style="left:0px;top:408.9px;width:190px;height:58.6px;background:#f2f2f2"></div>
<div class="a" style="left:0px;top:408.4px;width:190px;height:1.2px;background:#cbcbcb"></div>
<div class="a" style="left:0px;top:409.6px;width:190px;height:1px;background:#fafafa"></div>
<svg class="a" style="left:8.5px;top:417.4px" width="9" height="6"><path d="M1 1L4.5 4.5L8 1" fill="none" stroke="#222" stroke-width="1.4"/></svg>
<div class="t" style="left:27.0px;top:415.0px;font-size:11.3px;color:#222;-webkit-text-stroke:0.2px #222">Slice Result</div>
<div class="t" style="left:53.5px;top:443.2px;font-size:10.3px;letter-spacing:-0.3px;color:#2a2a2a">Basic Cut</div>
<svg class="a" style="left:166.0px;top:414.9px" width="12" height="10" fill="none" stroke="#333" stroke-width="1.2"><path d="M1 5Q6 -1 11 5Q6 11 1 5Z"/><circle cx="6" cy="5" r="1.6"/><path d="M1.5 0.5L10.5 9.5"/></svg>
<div class="a" style="left:22.5px;top:436.4px;width:23px;height:23px;background:#f5f5f5;border:2px solid #fff;box-shadow:0 0 0 0.5px #e0e0e0"></div>
<div class="a" style="left:0px;top:467.5px;width:190px;height:58.6px;background:#f2f2f2"></div>
<div class="a" style="left:0px;top:467.0px;width:190px;height:1.2px;background:#cbcbcb"></div>
<div class="a" style="left:0px;top:468.2px;width:190px;height:1px;background:#fafafa"></div>
<svg class="a" style="left:8.5px;top:476.0px" width="9" height="6"><path d="M1 1L4.5 4.5L8 1" fill="none" stroke="#222" stroke-width="1.4"/></svg>
<div class="t" style="left:27.0px;top:473.6px;font-size:11.3px;color:#222;-webkit-text-stroke:0.2px #222">Slice Result</div>
<div class="t" style="left:53.5px;top:501.8px;font-size:10.3px;letter-spacing:-0.3px;color:#2a2a2a">Basic Cut</div>
<svg class="a" style="left:165.0px;top:474.0px" width="14" height="9" fill="none" stroke="#333" stroke-width="1.3"><path d="M1 4.5Q7 -1.8 13 4.5Q7 10.8 1 4.5Z"/><circle cx="7" cy="4.5" r="1.9"/></svg>
<div class="a" style="left:22.0px;top:495.2px;width:24px;height:24px;background:#cfd817"></div><div class="a" style="left:24.5px;top:497.7px;width:19px;height:19px;background:#fafafa"></div><div class="a" style="left:26.5px;top:499.7px;width:15px;height:15px;background:#cfd817"></div>
<div class="a" style="left:190px;top:58px;width:12px;height:467px;background:#e9e9e9"></div>
<div class="a" style="left:192px;top:70.8px;width:10px;height:390.2px;background:#b6b6b6"></div>
<svg class="a" style="left:193px;top:62px" width="8" height="5"><path d="M0.5 4.5H7.5L4 0.5Z" fill="#888"/></svg>
<svg class="a" style="left:193px;top:515px" width="8" height="5"><path d="M0.5 0.5H7.5L4 4.5Z" fill="#222"/></svg>
<div class="a" style="left:0;top:525px;width:202px;height:37px;background:#f2f2f2"></div>
<div class="a" style="left:8px;top:529.8px;width:41.6px;height:28.2px;background:#fff;border:1px solid #9a9a9a;border-radius:2px"></div>
<div class="t" style="left:57.7px;top:539.6px;font-size:7.8px;color:#222">Blank Canvas</div>
<div class="a" style="left:0;top:562px;width:202px;height:39px;background:#d5d5d5"></div>
<div class="t" style="left:-11.6px;width:60px;text-align:center;top:588.7px;font-size:8.2px;color:#a8a8a8;">Slice</div>
<div class="t" style="left:24.3px;width:60px;text-align:center;top:588.7px;font-size:8.2px;color:#a8a8a8;">Weld</div>
<div class="t" style="left:62.7px;width:60px;text-align:center;top:588.7px;font-size:8.2px;color:#a8a8a8;">Attach</div>
<div class="t" style="left:104.6px;width:60px;text-align:center;top:588.7px;font-size:8.2px;color:#a8a8a8;">Flatten</div>
<div class="t" style="left:149.6px;width:60px;text-align:center;top:588.7px;font-size:8.8px;color:#333;-webkit-text-stroke:0.25px #333;">Contour</div>
<svg class="a" style="left:0;top:562px" width="202" height="39" fill="none" stroke-linecap="round" stroke-linejoin="round"><g transform="translate(10.399999999999977,6)" stroke="#a8a8a8" stroke-width="1.3"><path d="M7 1.5A5.5 5.5 0 1 0 3 11.5"/><path d="M6 6H14.5V15H5.5V11"/><path d="M7.5 12V8.5H10A1.5 1.5 0 0 1 10 12Z" stroke-width="1"/></g><g transform="translate(46.299999999999955,6)" stroke="#a8a8a8" stroke-width="1.3"><path d="M6 1A5 5 0 0 0 3 10V15H14.5V7.5H11A5 5 0 0 0 6 1Z"/></g><g transform="translate(84.20000000000005,9)" stroke="#a8a8a8" stroke-width="1.3"><path d="M13.5 1.5H4.5A3.5 3.5 0 0 0 4.5 8.5H13A2.2 2.2 0 0 0 13 4.1H5.5"/></g><g transform="translate(126.59999999999991,5)" stroke="#a8a8a8" stroke-width="1.2"><path d="M8 1V7M5.5 4.5L8 7L10.5 4.5M2 7L8 11L14 7M2 11L8 15L14 11"/></g><g transform="translate(171.5999999999999,6.5)" stroke="#222" stroke-width="1.5"><circle cx="8" cy="8" r="7" stroke-dasharray="3 2.2"/></g></svg></div>
</body></html>
